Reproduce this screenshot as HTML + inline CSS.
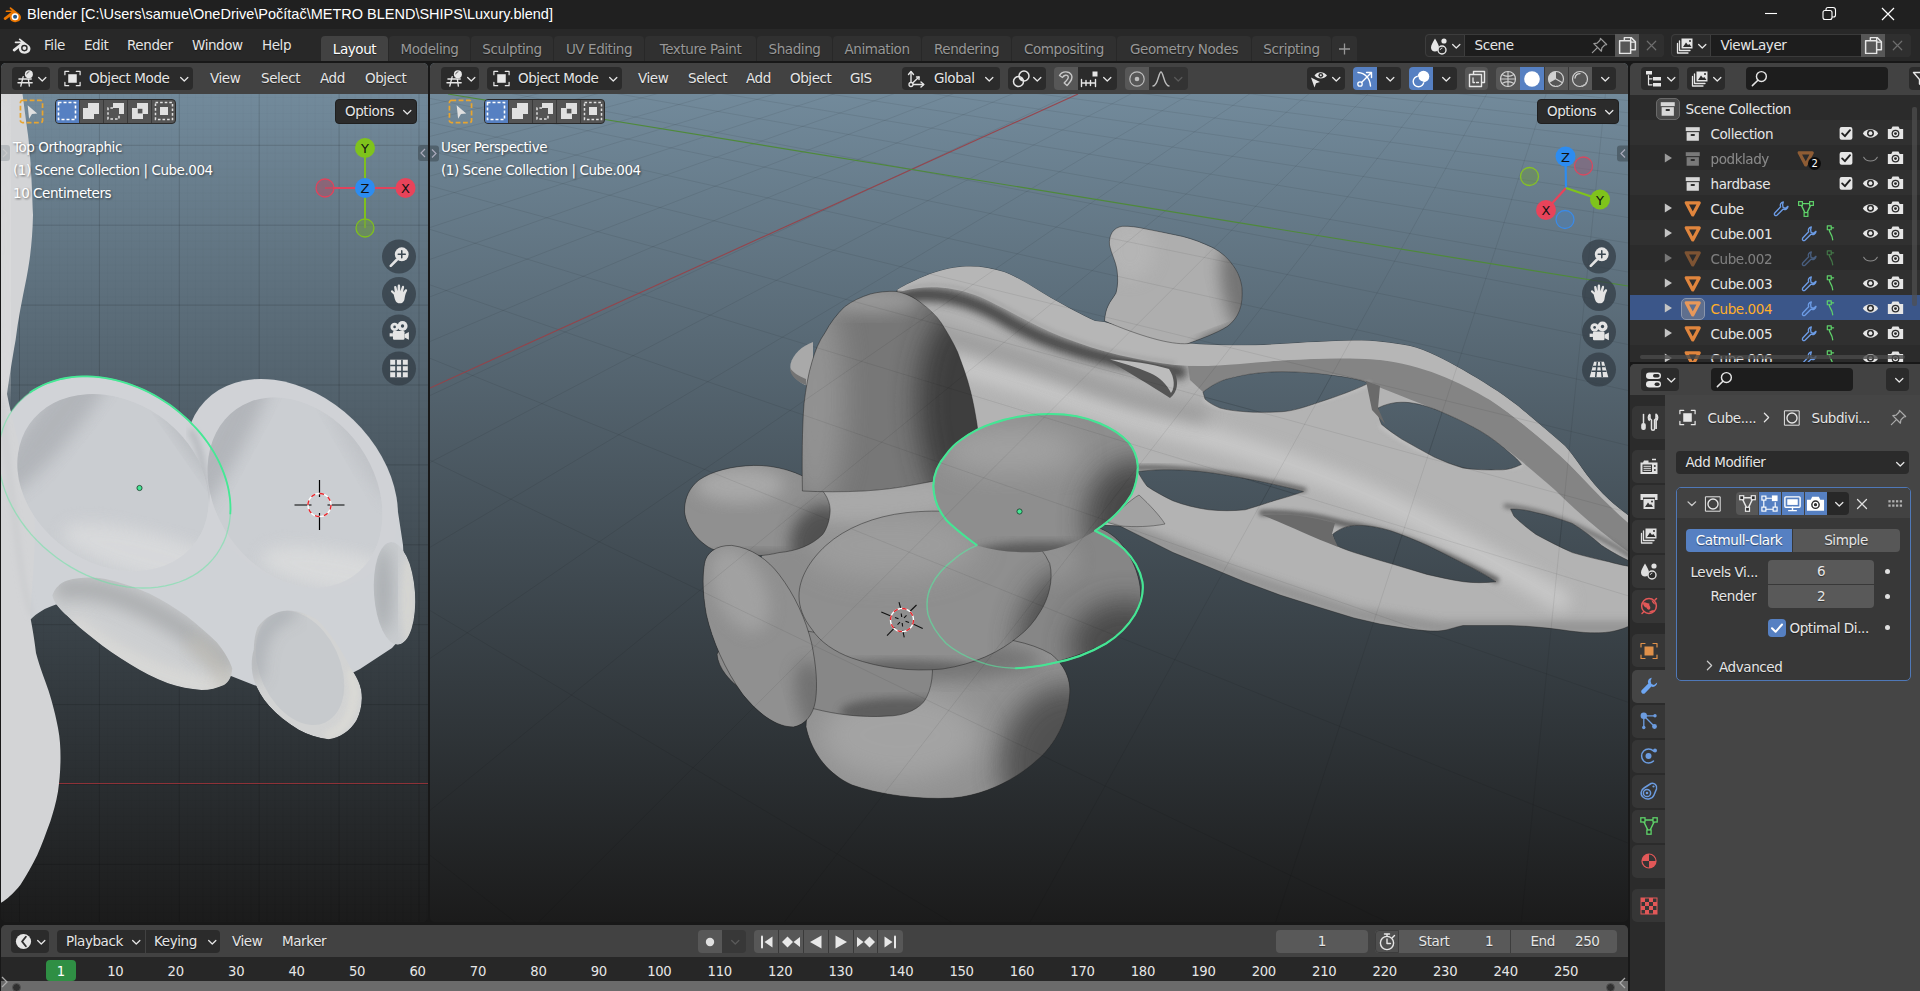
<!DOCTYPE html><html><head><meta charset="utf-8"><title>Blender</title><style>
*{box-sizing:border-box}
html,body{margin:0;padding:0}
body{width:1920px;height:991px;overflow:hidden;position:relative;background:#181818;font-family:"DejaVu Sans","Liberation Sans",sans-serif;font-size:13.5px;letter-spacing:-0.42px;color:#e6e6e6}
.a{position:absolute;display:block}
.t{white-space:nowrap}
.sh{text-shadow:0 0 2px rgba(0,0,0,.75),1px 1px 1px rgba(0,0,0,.6)}
.ts{text-shadow:0 1px 1px rgba(0,0,0,.45)}
</style></head><body><div class="a" style="left:0px;top:0px;width:1920px;height:29px;background:#202020"></div>
<svg class="a" style="left:3px;top:4px" width="19.5" height="19.5" viewBox="0 0 20 20"><path d="M1 14.2L8.6 8.3H3.6C2.4 8.3 2.4 6.6 3.6 6.6H9.2L7.2 5C6.2 4.2 7.3 2.9 8.3 3.7L17 10.4C19.5 12.8 18.6 16.3 16 17.8C13 19.4 9.3 18.6 7.7 16.4C6.9 15.2 6.8 14 7 13.1L3 16.2C1.9 17 0 15.3 1 14.2Z" fill="#ea7600"/><circle cx="12.4" cy="13.1" r="3.6" fill="#fff"/><circle cx="12.4" cy="13.1" r="2.1" fill="#265787"/></svg>
<div class="a t" style="left:27px;top:5px;line-height:18px;font-family:'Liberation Sans',sans-serif;font-size:14.5px;letter-spacing:0;color:#fff">Blender [C:\Users\samue\OneDrive\Počítač\METRO BLEND\SHIPS\Luxury.blend]</div>
<svg class="a" style="left:1760px;top:0" width="150" height="29" viewBox="0 0 150 29"><path d="M5 13.5H17" stroke="#fff" stroke-width="1.1"/><rect x="63" y="10.5" width="9" height="9" rx="2" fill="none" stroke="#fff" stroke-width="1.1"/><path d="M66 10.5V9.5A2 2 0 0 1 68 7.5H73A2.5 2.5 0 0 1 75.500 10V15A2 2 0 0 1 73.500 17H72" fill="none" stroke="#fff" stroke-width="1.1"/><path d="M122 8L134 20M134 8L122 20" stroke="#fff" stroke-width="1.2"/></svg>
<div class="a" style="left:0px;top:29px;width:1920px;height:32px;background:#282828"></div>
<svg class="a" style="left:12px;top:35px" width="20" height="20" viewBox="0 0 20 20"><path d="M1 14.2L8.6 8.3H3.6C2.4 8.3 2.4 6.6 3.6 6.6H9.2L7.2 5C6.2 4.2 7.3 2.9 8.3 3.7L17 10.4C19.5 12.8 18.6 16.3 16 17.8C13 19.4 9.3 18.6 7.7 16.4C6.9 15.2 6.8 14 7 13.1L3 16.2C1.9 17 0 15.3 1 14.2Z" fill="#e6e6e6"/><circle cx="12.4" cy="13.1" r="3.3" fill="#282828"/><circle cx="12.4" cy="13.1" r="1.9" fill="#e6e6e6"/></svg>
<div class="a t ts" style="left:44px;top:37px;line-height:16px;">File</div>
<div class="a t ts" style="left:84px;top:37px;line-height:16px;">Edit</div>
<div class="a t ts" style="left:127px;top:37px;line-height:16px;">Render</div>
<div class="a t ts" style="left:192px;top:37px;line-height:16px;">Window</div>
<div class="a t ts" style="left:262px;top:37px;line-height:16px;">Help</div>
<div class="a t ts" style="left:321px;top:36px;width:67px;height:25px;background:#424242;border-radius:4px 4px 0 0;text-align:center;line-height:26.5px;color:#fff">Layout</div>
<div class="a t ts" style="left:389px;top:36px;width:81px;height:25px;background:#303030;border-radius:4px 4px 0 0;text-align:center;line-height:26.5px;color:#989898">Modeling</div>
<div class="a t ts" style="left:471px;top:36px;width:82px;height:25px;background:#303030;border-radius:4px 4px 0 0;text-align:center;line-height:26.5px;color:#989898">Sculpting</div>
<div class="a t ts" style="left:554px;top:36px;width:90px;height:25px;background:#303030;border-radius:4px 4px 0 0;text-align:center;line-height:26.5px;color:#989898">UV Editing</div>
<div class="a t ts" style="left:645px;top:36px;width:111px;height:25px;background:#303030;border-radius:4px 4px 0 0;text-align:center;line-height:26.5px;color:#989898">Texture Paint</div>
<div class="a t ts" style="left:757px;top:36px;width:75px;height:25px;background:#303030;border-radius:4px 4px 0 0;text-align:center;line-height:26.5px;color:#989898">Shading</div>
<div class="a t ts" style="left:833px;top:36px;width:88px;height:25px;background:#303030;border-radius:4px 4px 0 0;text-align:center;line-height:26.5px;color:#989898">Animation</div>
<div class="a t ts" style="left:922px;top:36px;width:89px;height:25px;background:#303030;border-radius:4px 4px 0 0;text-align:center;line-height:26.5px;color:#989898">Rendering</div>
<div class="a t ts" style="left:1012px;top:36px;width:104px;height:25px;background:#303030;border-radius:4px 4px 0 0;text-align:center;line-height:26.5px;color:#989898">Compositing</div>
<div class="a t ts" style="left:1117px;top:36px;width:134px;height:25px;background:#303030;border-radius:4px 4px 0 0;text-align:center;line-height:26.5px;color:#989898">Geometry Nodes</div>
<div class="a t ts" style="left:1252px;top:36px;width:79px;height:25px;background:#303030;border-radius:4px 4px 0 0;text-align:center;line-height:26.5px;color:#989898">Scripting</div>
<div class="a" style="left:1332px;top:36px;width:25px;height:25px;background:#303030;border-radius:4px 4px 0 0"></div>
<svg class="a" style="left:1332px;top:36px" width="25" height="25"><path d="M12.5 7.500V18.5M7 13H18" stroke="#989898" stroke-width="1.3" fill="none"/></svg>
<div class="a" style="left:1425px;top:34px;width:239px;height:23px;background:#1d1d1d;border-radius:4px;border:1px solid #3a3a3a"></div>
<div class="a" style="left:1425px;top:34px;width:39.5px;height:23px;background:#2b2b2b;border-radius:4px 0 0 4px;border:1px solid #3d3d3d"></div>
<svg class="a" style="left:1429px;top:36px" width="20" height="20" viewBox="0 0 20 20"><path d="M6 2.5C8 6 10 9 10 11.5C10 14 8.3 15.5 6 15.5C3.7 15.5 2 14 2 11.5C2 9 4 6 6 2.5Z" fill="#e6e6e6"/><circle cx="15" cy="5" r="2.6" fill="#e6e6e6"/><circle cx="13" cy="14" r="4" fill="#2b2b2b" stroke="#e6e6e6" stroke-width="1.4"/><path d="M11.3 13.5A1.9 1.9 0 0 1 13 12" fill="none" stroke="#e6e6e6" stroke-width="0.9" stroke-linecap="round" stroke-linejoin="round" /></svg>
<svg class="a" style="left:1446px;top:37px" width="18" height="18" viewBox="0 0 20 20"><path d="M7.4 8.3L11.4 12.2L15.4 8.3" fill="none" stroke="#e6e6e6" stroke-width="1.4" stroke-linecap="round" stroke-linejoin="round" /></svg>
<div class="a t" style="left:1474.5px;top:37px;line-height:16px;">Scene</div>
<svg class="a" style="left:1590px;top:36px" width="19" height="19" viewBox="0 0 20 20"><path d="M11 2.5L17.5 9L15.5 9.5L12.5 12.5L12 16L4 8L7.5 7.5L10.5 4.5Z" fill="none" stroke="#9a9a9a" stroke-width="1.3" stroke-linecap="round" stroke-linejoin="round" /><path d="M7.8 12.2L2.5 17.5" fill="none" stroke="#9a9a9a" stroke-width="1.3" stroke-linecap="round" stroke-linejoin="round" /></svg>
<div class="a" style="left:1615px;top:34px;width:24px;height:23px;background:#575757"></div>
<svg class="a" style="left:1617px;top:35px" width="21" height="21" viewBox="0 0 20 20"><path d="M7 5V2.5H13.5L17.5 6.5V14H13" fill="none" stroke="#e6e6e6" stroke-width="1.4" stroke-linecap="round" stroke-linejoin="round" /><path d="M13 2.8V6.8H17" fill="none" stroke="#e6e6e6" stroke-width="1.2" stroke-linecap="round" stroke-linejoin="round" /><rect x="2.5" y="5.5" width="10.5" height="12" fill="none" stroke="#e6e6e6" stroke-width="1.4" stroke-linecap="round" stroke-linejoin="round" /></svg>
<div class="a" style="left:1639px;top:34px;width:25px;height:23px;background:#2f2f2f;border-radius:0 4px 4px 0"></div>
<svg class="a" style="left:1643px;top:37px" width="17" height="17" viewBox="0 0 20 20"><path d="M5 5L15 15M15 5L5 15" fill="none" stroke="#6e6e6e" stroke-width="1.4" stroke-linecap="round" stroke-linejoin="round" /></svg>
<div class="a" style="left:1671px;top:34px;width:239.5px;height:23px;background:#1d1d1d;border-radius:4px;border:1px solid #3a3a3a"></div>
<div class="a" style="left:1671px;top:34px;width:39.5px;height:23px;background:#2b2b2b;border-radius:4px 0 0 4px;border:1px solid #3d3d3d"></div>
<svg class="a" style="left:1675px;top:36px" width="20" height="20" viewBox="0 0 20 20"><rect x="6.5" y="2.5" width="11" height="10" fill="#e6e6e6"/><path d="M8 11L11 6.5L13 9L14.3 8L16.5 11Z" fill="#2b2b2b"/><circle cx="15" cy="5" r="1" fill="#2b2b2b"/><path d="M4.5 5V14.5H15M2.5 7.5V17H13" fill="none" stroke="#e6e6e6" stroke-width="1.3" stroke-linecap="round" stroke-linejoin="round" /></svg>
<svg class="a" style="left:1692px;top:37px" width="18" height="18" viewBox="0 0 20 20"><path d="M7.4 8.3L11.4 12.2L15.4 8.3" fill="none" stroke="#e6e6e6" stroke-width="1.4" stroke-linecap="round" stroke-linejoin="round" /></svg>
<div class="a t" style="left:1720.5px;top:37px;line-height:16px;">ViewLayer</div>
<div class="a" style="left:1860.5px;top:34px;width:24.5px;height:23px;background:#575757"></div>
<svg class="a" style="left:1862.5px;top:35px" width="21" height="21" viewBox="0 0 20 20"><path d="M7 5V2.5H13.5L17.5 6.5V14H13" fill="none" stroke="#e6e6e6" stroke-width="1.4" stroke-linecap="round" stroke-linejoin="round" /><path d="M13 2.8V6.8H17" fill="none" stroke="#e6e6e6" stroke-width="1.2" stroke-linecap="round" stroke-linejoin="round" /><rect x="2.5" y="5.5" width="10.5" height="12" fill="none" stroke="#e6e6e6" stroke-width="1.4" stroke-linecap="round" stroke-linejoin="round" /></svg>
<div class="a" style="left:1885px;top:34px;width:25.5px;height:23px;background:#2f2f2f;border-radius:0 4px 4px 0"></div>
<svg class="a" style="left:1889px;top:37px" width="17" height="17" viewBox="0 0 20 20"><path d="M5 5L15 15M15 5L5 15" fill="none" stroke="#6e6e6e" stroke-width="1.4" stroke-linecap="round" stroke-linejoin="round" /></svg>
<div class="a" style="left:1px;top:63px;width:426.5px;height:859px;border-radius:5px;overflow:hidden;background:linear-gradient(#728a9b 3.6%,#1b1b1b 100%)"><svg class="a" style="left:-1px;top:-63px" width="1920" height="991" viewBox="0 0 1920 991"><defs><filter id="lb3" x="-20%" y="-20%" width="140%" height="140%"><feGaussianBlur stdDeviation="3"/></filter><filter id="lb8" x="-30%" y="-30%" width="160%" height="160%"><feGaussianBlur stdDeviation="8"/></filter><filter id="lb16" x="-40%" y="-40%" width="180%" height="180%"><feGaussianBlur stdDeviation="16"/></filter><clipPath id="lcP3"><path d="M52.300 595.500C55 588 60 583 67.200 580.500C80 577 92 577 104.500 578.700C120 582 135 587 149.300 593.600C162 600 175 608 186.600 616C197 624 207 633 216.500 642.100C223 650 229 659 232.200 668.200C232 676 229 682 224 685C217 688 210 690 201.600 690C190 689 179 687 168 683.200C155 678 142 672 130.600 664.500C117 656 105 648 93.300 638.400C84 631 75 624 67.200 616C60 610 54 603 52.300 595.500Z"/></clipPath><clipPath id="lcP4"><path d="M257.600 627.200C264 618 275 611 287.400 610.400C298 610.500 309 614 317.300 619.700C330 632 342 650 350.900 668.200C356 676 360 683 361.300 690.600C363 701 361 712 356.500 720.500C350 731 340 738 328.500 739.200C318 738 308 735 298.600 729.800C287 723 277 715 268.800 705.600C262 698 257 689 253.800 679.400C251 670 251 659 253.800 649.600C254 641 255 634 257.600 627.200Z"/></clipPath><clipPath id="lcD1"><ellipse cx="113" cy="482.600" rx="102" ry="81.300" transform="rotate(35 113 482.600)"/></clipPath><clipPath id="lcD2"><ellipse cx="295" cy="492.500" rx="102" ry="79.400" transform="rotate(55 295 492.500)"/></clipPath><clipPath id="lcP5"><ellipse cx="394.500" cy="593.400" rx="20.500" ry="51.500" transform="rotate(-4 394.500 593.400)"/></clipPath><clipPath id="lcVP"><rect x="0" y="63" width="428" height="860"/></clipPath></defs><path d="M19.5 94V922M99.4 94V922M179.3 94V922M259.2 94V922M339.1 94V922M419.0 94V922M498.9 94V922M0 65.4H428M0 145.3H428M0 225.2H428M0 305.1H428M0 385.0H428M0 464.9H428M0 544.8H428M0 624.7H428M0 704.6H428M0 784.5H428M0 864.4H428M0 944.3H428" stroke="#000" stroke-opacity=".14" stroke-width="1" fill="none"/><path d="M3.5 94V922M11.5 94V922M27.5 94V922M35.5 94V922M43.5 94V922M51.4 94V922M59.4 94V922M67.4 94V922M75.4 94V922M83.4 94V922M91.4 94V922M107.4 94V922M115.4 94V922M123.4 94V922M131.3 94V922M139.3 94V922M147.3 94V922M155.3 94V922M163.3 94V922M171.3 94V922M187.3 94V922M195.3 94V922M203.2 94V922M211.2 94V922M219.2 94V922M227.2 94V922M235.2 94V922M243.2 94V922M251.2 94V922M267.2 94V922M275.2 94V922M283.2 94V922M291.1 94V922M299.1 94V922M307.1 94V922M315.1 94V922M323.1 94V922M331.1 94V922M347.1 94V922M355.1 94V922M363.1 94V922M371.0 94V922M379.0 94V922M387.0 94V922M395.0 94V922M403.0 94V922M411.0 94V922M427.0 94V922M0 89.3H428M0 97.3H428M0 105.3H428M0 113.3H428M0 121.3H428M0 129.2H428M0 137.2H428M0 153.2H428M0 161.2H428M0 169.2H428M0 177.2H428M0 185.2H428M0 193.2H428M0 201.2H428M0 209.2H428M0 217.1H428M0 233.1H428M0 241.1H428M0 249.1H428M0 257.1H428M0 265.1H428M0 273.1H428M0 281.1H428M0 289.1H428M0 297.0H428M0 313.0H428M0 321.0H428M0 329.0H428M0 337.0H428M0 345.0H428M0 353.0H428M0 361.0H428M0 369.0H428M0 376.9H428M0 392.9H428M0 400.9H428M0 408.9H428M0 416.9H428M0 424.9H428M0 432.9H428M0 440.9H428M0 448.9H428M0 456.8H428M0 472.8H428M0 480.8H428M0 488.8H428M0 496.8H428M0 504.8H428M0 512.8H428M0 520.8H428M0 528.8H428M0 536.7H428M0 552.7H428M0 560.7H428M0 568.7H428M0 576.7H428M0 584.7H428M0 592.7H428M0 600.7H428M0 608.7H428M0 616.6H428M0 632.6H428M0 640.6H428M0 648.6H428M0 656.6H428M0 664.6H428M0 672.6H428M0 680.6H428M0 688.5H428M0 696.5H428M0 712.5H428M0 720.5H428M0 728.5H428M0 736.5H428M0 744.5H428M0 752.5H428M0 760.5H428M0 768.5H428M0 776.4H428M0 792.4H428M0 800.4H428M0 808.4H428M0 816.4H428M0 824.4H428M0 832.4H428M0 840.4H428M0 848.4H428M0 856.3H428M0 872.3H428M0 880.3H428M0 888.3H428M0 896.3H428M0 904.3H428M0 912.3H428M0 920.3H428" stroke="#000" stroke-opacity=".014" stroke-width="1" fill="none"/><path d="M0 783.5H428" stroke="#8e3238" stroke-width="1.2"/><g clip-path="url(#lcVP)"><path d="M0 400L30 432L192 432L230 520L398 512L403 545L406 600L399 640L392 648L360 669L300 700L253.800 685L231 676L150 620L56 604.500C45 608 37 613 30 620L0 560Z" fill="#cfd2d6"/><ellipse cx="291.7" cy="484" rx="120" ry="89" transform="rotate(43.8 291.7 484)" fill="#d0d2d6" /><ellipse cx="114.5" cy="482.2" rx="125" ry="95" transform="rotate(35 114.5 482.2)" fill="#d1d3d7" /><path d="M190 430C200 445 205 470 206 500" stroke="#aeb1b6" stroke-width="6" fill="none" filter="url(#lb3)" opacity=".8"/><path d="M0 90L22 90C24 105 26 121 28 135C30 150 32 180 33 215C32.500 240 30 260 26.500 278C22 300 18 320 15.600 340C12 360 9 380 7 394C12 420 20 445 23.400 467C30 490 34 510 35 525.500C35 550 33 580 30 616C33 630 35 645 36 653C40 668 45 680 48.500 690.600C53 705 56 717 58 728C60 738 60.500 748 60.500 757.800C60.500 770 59.500 781 58 791.400C56 803 53 813 50.400 821.300C46 833 42 845 37.300 855C32 866 26 876 20.500 884.700C13 894 6 900 0 903.400Z" fill="#d3d4d6"/><path d="M0 392C5 440 12 500 20 560C24 590 28 605 32 615" stroke="#bfc1c4" stroke-width="2" fill="none" filter="url(#lb3)"/><path d="M2 94C8 200 12 300 4 395" stroke="#e2e2e2" stroke-width="10" fill="none" filter="url(#lb8)" opacity=".7"/><g clip-path="url(#lcD1)"><ellipse cx="113" cy="482.6" rx="102" ry="81.3" transform="rotate(35 113 482.6)" fill="#cacdd1" /><ellipse cx="58" cy="418" rx="100" ry="22" transform="rotate(-52 58 418)" fill="#aeb1b6" filter="url(#lb8)" opacity=".85"/><ellipse cx="150" cy="555" rx="90" ry="22" transform="rotate(15 150 555)" fill="#d9dadc" filter="url(#lb8)" opacity=".9"/><ellipse cx="195" cy="440" rx="12" ry="70" transform="rotate(-35 195 440)" fill="#b4b7bb" filter="url(#lb8)" opacity=".8"/></g><g clip-path="url(#lcD2)"><ellipse cx="295" cy="492.5" rx="102" ry="79.4" transform="rotate(55 295 492.5)" fill="#cbced2" /><ellipse cx="226" cy="436" rx="100" ry="20" transform="rotate(-62 226 436)" fill="#aeb1b6" filter="url(#lb8)" opacity=".85"/><ellipse cx="335" cy="570" rx="75" ry="20" transform="rotate(10 335 570)" fill="#dadbdc" filter="url(#lb8)" opacity=".9"/><ellipse cx="360" cy="440" rx="14" ry="70" transform="rotate(-30 360 440)" fill="#bbbec2" filter="url(#lb8)" opacity=".7"/></g><g clip-path="url(#lcP5)"><ellipse cx="394.5" cy="593.4" rx="20.5" ry="51.5" transform="rotate(-4 394.5 593.4)" fill="#c9cccf" /><ellipse cx="383" cy="590" rx="9" ry="45" fill="#a4a8ac" filter="url(#lb8)" opacity=".9"/><ellipse cx="408" cy="600" rx="7" ry="45" fill="#d6d6d2" filter="url(#lb3)" opacity=".9"/></g><g clip-path="url(#lcP3)"><path d="M52.300 595.500C55 588 60 583 67.200 580.500C80 577 92 577 104.500 578.700C120 582 135 587 149.300 593.600C162 600 175 608 186.600 616C197 624 207 633 216.500 642.100C223 650 229 659 232.200 668.200C232 676 229 682 224 685C217 688 210 690 201.600 690C190 689 179 687 168 683.200C155 678 142 672 130.600 664.500C117 656 105 648 93.300 638.400C84 631 75 624 67.200 616C60 610 54 603 52.300 595.500Z" fill="#cdcfd1"/><path d="M55 590C100 580 170 610 232 668" stroke="#a9abad" stroke-width="22" fill="none" filter="url(#lb8)" opacity=".9"/><path d="M70 622C110 655 170 685 225 688" stroke="#dddcd8" stroke-width="16" fill="none" filter="url(#lb8)" opacity=".9"/><path d="M190 640C215 660 228 675 226 690" stroke="#c2bfb6" stroke-width="14" fill="none" filter="url(#lb8)" opacity=".8"/></g><g clip-path="url(#lcP4)"><path d="M257.600 627.200C264 618 275 611 287.400 610.400C298 610.500 309 614 317.300 619.700C330 632 342 650 350.900 668.200C356 676 360 683 361.300 690.600C363 701 361 712 356.500 720.500C350 731 340 738 328.500 739.200C318 738 308 735 298.600 729.800C287 723 277 715 268.800 705.600C262 698 257 689 253.800 679.400C251 670 251 659 253.800 649.600C254 641 255 634 257.600 627.200Z" fill="#d2d3d3"/><ellipse cx="300" cy="668" rx="40" ry="60" transform="rotate(-25 300 668)" fill="#c7cacd"/><path d="M256 680C252 640 270 612 295 612" stroke="#a7abb0" stroke-width="14" fill="none" filter="url(#lb8)" opacity=".9"/><path d="M350 670C360 700 350 730 325 736" stroke="#dcdbd6" stroke-width="8" fill="none" filter="url(#lb3)" opacity=".9"/></g><path d="M216.9 553.9L212.8 559.2L208.3 564.0L203.3 568.5L197.9 572.6L192.1 576.2L185.9 579.4L179.3 582.0L172.5 584.2L165.3 585.9L157.9 587.1L150.3 587.8L142.5 588.0L134.6 587.7L126.6 586.8L118.5 585.4L110.4 583.6L102.3 581.2L94.3 578.4L86.4 575.1L78.6 571.3L71.0 567.1L63.6 562.5L56.5 557.5L49.6 552.1L43.1 546.4L36.9 540.4L31.0 534.1L25.6 527.5L20.6 520.7L16.1 513.7L12.1 506.6L8.5 499.4L5.5 492.1L3.0 484.7L1.0 477.3L-0.4 469.9L-1.2 462.6L-1.5 455.4L-1.2 448.4L-0.4 441.4L1.1 434.7L3.0 428.2L5.5 422.0L8.6 416.1L12.1 410.5L16.2 405.2L20.7 400.4L25.7 395.9L31.1 391.8L36.9 388.2L43.1 385.0L49.7 382.4L56.5 380.2L63.7 378.5L71.1 377.3L78.7 376.6L86.5 376.4L94.4 376.7L102.4 377.6L110.5 379.0L118.6 380.8L126.7 383.2L134.7 386.0L142.6 389.3L150.4 393.1L158.0 397.3L165.4 401.9L172.5 406.9L179.4 412.3L185.9 418.0L192.1 424.0L198.0 430.3L203.4 436.9L208.4 443.7L212.9 450.7L216.9 457.8L220.5 465.0L223.5 472.3L226.0 479.7L228.0 487.1L229.4 494.5L230.2 501.8L230.5 509.0L230.2 516.0L229.4 523.0L227.9 529.7L226.0 536.2L223.5 542.4L220.4 548.3L216.9 553.9Z" fill="none" stroke="#5fe8a0" stroke-width="1.3" opacity=".5"/><path d="M29.7 392.8L33.7 390.1L37.8 387.7L42.2 385.5L46.7 383.5L51.4 381.8L56.2 380.3L61.2 379.0L66.3 378.0L71.5 377.2L76.8 376.7L82.2 376.4L87.7 376.4L93.2 376.7L98.8 377.1L104.4 377.9L110.1 378.9L115.8 380.1L121.4 381.6L127.1 383.3L132.7 385.3L138.3 387.5L143.8 389.9L149.2 392.5L154.6 395.4L159.9 398.4L165.0 401.7L170.1 405.1L175.0 408.8L179.7 412.6L184.3 416.6L188.8 420.7L193.0 425.0L197.1 429.4L201.0 433.9L204.7 438.6L208.1 443.3L211.4 448.2L214.4 453.1L217.1 458.1L219.6 463.2L221.9 468.3L223.9 473.4L225.7 478.6L227.2 483.8L228.4 488.9L229.3 494.1L230.0 499.2L230.4 504.3L230.5 509.3L230.3 514.3" fill="none" stroke="#45e895" stroke-width="1.800"/><circle cx="139.500" cy="488" r="2.600" fill="#45e594" stroke="#1a3a2a" stroke-width=".8"/></g><g font-family="'DejaVu Sans','Liberation Sans',sans-serif" style="letter-spacing:-0.45px"><filter id="tb" x="-10%" y="-30%" width="120%" height="160%"><feGaussianBlur stdDeviation="1"/></filter><text x="14" y="153" font-size="13.5" fill="#000" fill-opacity=".55" filter="url(#tb)">Top Orthographic</text><text x="13" y="152" font-size="13.5" fill="#fff">Top Orthographic</text><text x="14" y="176" font-size="13.5" fill="#000" fill-opacity=".55" filter="url(#tb)">(1) Scene Collection | Cube.004</text><text x="13" y="175" font-size="13.5" fill="#fff">(1) Scene Collection | Cube.004</text><text x="14" y="199" font-size="13.5" fill="#000" fill-opacity=".55" filter="url(#tb)">10 Centimeters</text><text x="13" y="198" font-size="13.5" fill="#fff">10 Centimeters</text><path d="M365 188V148M365 188V228" stroke="#7fbf1f" stroke-width="2"/><path d="M365 188H405M365 188H325" stroke="#e0435c" stroke-width="2"/><circle cx="325" cy="188" r="9" fill="#a0566a" fill-opacity=".6" stroke="#e0435c" stroke-width="1.3"/><circle cx="365" cy="228" r="9" fill="#6f9a4a" fill-opacity=".6" stroke="#7fbf1f" stroke-width="1.3"/><circle cx="365" cy="148" r="10" fill="#7fc31c"/><text x="365" y="153" font-size="13" fill="#111" text-anchor="middle" letter-spacing="0">Y</text><circle cx="405.500" cy="188" r="10" fill="#e8435a"/><text x="405.5" y="193" font-size="13" fill="#111" text-anchor="middle" letter-spacing="0">X</text><circle cx="365" cy="188" r="10" fill="#2d8cf0"/><text x="365" y="193" font-size="13" fill="#111" text-anchor="middle" letter-spacing="0">Z</text><circle cx="399" cy="256.5" r="17" fill="#323c44" fill-opacity=".72"/><svg x="388" y="245.5" width="22" height="22" viewBox="0 0 20 20"><circle cx="12.5" cy="8" r="6.3" fill="#e4e4e4"/><path d="M8 13L2.5 18.5" fill="none" stroke="#e4e4e4" stroke-width="2.4" stroke-linecap="round" stroke-linejoin="round" /><path d="M12.5 4.8V11.2M9.3 8H15.7" fill="none" stroke="#3b4852" stroke-width="1.4" stroke-linecap="round" stroke-linejoin="round" /></svg><circle cx="399" cy="294" r="17" fill="#323c44" fill-opacity=".72"/><svg x="388" y="283" width="22" height="22" viewBox="0 0 20 20"><path d="M5.2 10.5L3 8.4C2 7.4 3.3 6 4.4 7L6.2 8.6L5.6 4C5.4 2.6 7.4 2.2 7.7 3.7L8.6 7.6L8.8 2.4C8.9 1 11 1 11 2.4L11.2 7.6L12.6 3.4C13 2 15 2.6 14.6 4L13.6 8.4L15.6 6C16.6 5 18 6 17.2 7.2C15.5 10 15.5 12 15 14.5C14.5 17.5 12.5 18.5 10.5 18.5C7.5 18.5 6.5 16.5 5.2 10.5Z" fill="#e4e4e4"/></svg><circle cx="399" cy="331.5" r="17" fill="#323c44" fill-opacity=".72"/><svg x="388" y="320.5" width="22" height="22" viewBox="0 0 20 20"><circle cx="6" cy="5.8" r="3.8" fill="#e4e4e4"/><circle cx="13.2" cy="5" r="4.6" fill="#e4e4e4"/><rect x="4.5" y="9.5" width="10.5" height="8" rx="1.2" fill="#e4e4e4"/><path d="M15 12.5L19 10.5V17.5L15 15.5Z" fill="#e4e4e4"/><path d="M1.5 11.5h3v3h-3z" fill="#e4e4e4"/><circle cx="6" cy="5.8" r="1.2" fill="#3b4852"/><circle cx="13.2" cy="5" r="1.5" fill="#3b4852"/></svg><circle cx="399" cy="368.5" r="17" fill="#323c44" fill-opacity=".72"/><svg x="388" y="357.5" width="22" height="22" viewBox="0 0 20 20"><rect x="2" y="2" width="16" height="16" fill="#e4e4e4"/><path d="M7.3 2V18M12.7 2V18M2 7.3H18M2 12.7H18" stroke="#3b4852" stroke-width="1.5"/></svg><path d="M294.5 505H311.5M327.5 505H344.5M319.5 480V497M319.5 513V530" stroke="#000" stroke-width="1.2"/><circle cx="319.5" cy="505" r="11.500" fill="none" stroke="#fff" stroke-width="1.4"/><circle cx="319.5" cy="505" r="11.500" fill="none" stroke="#e8262c" stroke-width="1.4" stroke-dasharray="4.5 4.5"/><rect x="-4" y="145" width="14" height="16" rx="3" fill="#9aa2a8" fill-opacity=".55"/><path d="M3 149L7 153L3 157" stroke="#ccc" stroke-width="1.2" fill="none" opacity=".8"/><rect x="418" y="145" width="14" height="16" rx="3" fill="#4a5963" fill-opacity=".8"/><path d="M425 149L421 153L425 157" stroke="#aab" stroke-width="1.2" fill="none"/></g></svg></div>
<div class="a" style="left:1px;top:63px;width:426.5px;height:31px;background:#424242;border-radius:5px 5px 0 0"></div>
<div class="a" style="left:12px;top:67px;width:38px;height:23px;background:#2b2b2b;border-radius:4px"></div>
<svg class="a" style="left:17px;top:69px" width="19" height="19" viewBox="0 0 20 20"><path d="M2 10.5H15M1 14.5H16M6.5 8L4 18M12 11L13 18" fill="none" stroke="#e6e6e6" stroke-width="1.4" stroke-linecap="round" stroke-linejoin="round" /><circle cx="12.5" cy="5.5" r="4.2" fill="#e6e6e6"/><path d="M10.2 5.2A2.6 2.6 0 0 1 12.6 2.9" fill="none" stroke="#555" stroke-width="1" stroke-linecap="round" stroke-linejoin="round" /></svg>
<svg class="a" style="left:32px;top:70px" width="18" height="18" viewBox="0 0 20 20"><path d="M7.4 8.3L11.4 12.2L15.4 8.3" fill="none" stroke="#e6e6e6" stroke-width="1.4" stroke-linecap="round" stroke-linejoin="round" /></svg>
<div class="a" style="left:58px;top:67px;width:135px;height:23px;background:#2b2b2b;border-radius:4px"></div>
<svg class="a" style="left:63px;top:69px" width="19" height="19" viewBox="0 0 20 20"><rect x="5.5" y="5.5" width="9" height="9" fill="#e6e6e6"/><path d="M2 6V2.5H6M14 2.5H18V6M18 14V17.5H14M6 17.5H2V14" fill="none" stroke="#e6e6e6" stroke-width="1.3" stroke-linecap="round" stroke-linejoin="round" /></svg>
<div class="a t ts" style="left:89px;top:70px;line-height:16px;">Object Mode</div>
<svg class="a" style="left:174px;top:70px" width="18" height="18" viewBox="0 0 20 20"><path d="M7.4 8.3L11.4 12.2L15.4 8.3" fill="none" stroke="#e6e6e6" stroke-width="1.4" stroke-linecap="round" stroke-linejoin="round" /></svg>
<div class="a t ts" style="left:210px;top:70px;line-height:16px;">View</div>
<div class="a t ts" style="left:261px;top:70px;line-height:16px;">Select</div>
<div class="a t ts" style="left:320px;top:70px;line-height:16px;">Add</div>
<div class="a t ts" style="left:365px;top:70px;line-height:16px;">Object</div>
<svg class="a" style="left:19px;top:99px" width="25" height="25" viewBox="0 0 26 26"><rect x="1.5" y="1.5" width="23" height="23" rx="2" fill="none" stroke="#e8a530" stroke-width="1.8" stroke-dasharray="5 2.6"/><path d="M9 6.5L19 15L13.5 15.5L10.5 20.5Z" fill="#e0e0e0"/></svg>
<div class="a" style="left:54.5px;top:99px;width:121.5px;height:24.5px;background:#545454;border-radius:4px;border:1px solid #2a2a2a;overflow:hidden"></div>
<div class="a" style="left:55.5px;top:100px;width:23.5px;height:22.5px;background:#5680c2;border-radius:3px 0 0 3px"></div>
<svg class="a" style="left:55.3px;top:99.3px" width="24" height="24" viewBox="0 0 24 24"><rect x="3.5" y="3.5" width="17" height="17" fill="none" stroke="#fff" stroke-width="1.6" stroke-dasharray="3 2"/></svg>
<div class="a" style="left:79.1px;top:100px;width:1px;height:22.5px;background:#3a3a3a"></div>
<svg class="a" style="left:79.39999999999999px;top:99.3px" width="24" height="24" viewBox="0 0 24 24"><path d="M9 4H20V15H15V20H4V9H9Z" fill="#e0e0e0"/></svg>
<div class="a" style="left:103.2px;top:100px;width:1px;height:22.5px;background:#3a3a3a"></div>
<svg class="a" style="left:103.5px;top:99.3px" width="24" height="24" viewBox="0 0 24 24"><path d="M9 4H20V15H15V9H9Z" fill="#e0e0e0"/><path d="M9 9H4V20H15V15" fill="none" stroke="#e0e0e0" stroke-width="1.5" stroke-dasharray="2.6 2"/></svg>
<div class="a" style="left:127.30000000000001px;top:100px;width:1px;height:22.5px;background:#3a3a3a"></div>
<svg class="a" style="left:127.60000000000001px;top:99.3px" width="24" height="24" viewBox="0 0 24 24"><path d="M9 4H20V15H15V20H4V9H9Z" fill="#e0e0e0"/><rect x="9.8" y="9.8" width="4.6" height="4.6" fill="#545454"/></svg>
<div class="a" style="left:151.4px;top:100px;width:1px;height:22.5px;background:#3a3a3a"></div>
<svg class="a" style="left:151.70000000000002px;top:99.3px" width="24" height="24" viewBox="0 0 24 24"><rect x="8" y="8" width="8" height="8" fill="#e0e0e0"/><rect x="3.5" y="3.5" width="17" height="17" fill="none" stroke="#e0e0e0" stroke-width="1.5" stroke-dasharray="2.6 2"/></svg>
<div class="a" style="left:335px;top:99px;width:82px;height:24.5px;background:#2b2b2b;border-radius:4px;border:1px solid #1f1f1f"></div>
<div class="a t ts" style="left:345px;top:103px;line-height:16px;">Options</div>
<svg class="a" style="left:397px;top:103px" width="18" height="18" viewBox="0 0 20 20"><path d="M7.4 8.3L11.4 12.2L15.4 8.3" fill="none" stroke="#e6e6e6" stroke-width="1.4" stroke-linecap="round" stroke-linejoin="round" /></svg>
<div class="a" style="left:430px;top:63px;width:1197.5px;height:859px;border-radius:5px;overflow:hidden;background:linear-gradient(#728a9b 3.6%,#1b1b1b 100%)"><svg class="a" style="left:-430px;top:-63px" width="1920" height="991" viewBox="0 0 1920 991"><defs><filter id="b2" x="-20%" y="-20%" width="140%" height="140%"><feGaussianBlur stdDeviation="2"/></filter><filter id="b4" x="-20%" y="-20%" width="140%" height="140%"><feGaussianBlur stdDeviation="4"/></filter><filter id="b8" x="-30%" y="-30%" width="160%" height="160%"><feGaussianBlur stdDeviation="8"/></filter><filter id="b14" x="-40%" y="-40%" width="180%" height="180%"><feGaussianBlur stdDeviation="14"/></filter><clipPath id="cHull"><path clip-rule="evenodd" d="M897 290C905 285 915 280 930 274C945 269 955 267 966 266.500C980 266 991 268 1004 272C1016 276 1034 288 1051 298C1067 307 1082 315 1095 321L1104 322L1188 343.500C1210 345 1245 346.500 1280 344C1303 342.500 1330 341 1354 340.500C1375 340.500 1391 342.500 1410 346C1427 350 1445 360 1463 370C1482 381 1500 392 1518 406C1536 421 1551 434 1565 446C1575 457 1583 471 1594 484C1605 497 1616 507 1640 524V622L1627 627C1615 632 1601 635 1570 631C1550 628 1520 625 1500 625.500H1463C1455 627 1446 631 1438 631C1425 631.500 1409 629 1380 624L1354 618L1318 607L1280 595L1245 582L1210 567.500L1173 552.500L1150 541L1120 526L1000 520L940 480L900 400ZM1203 392C1212 385 1220 381 1227 379C1245 374 1262 372 1282 371.700C1300 372 1318 373 1333 375.300C1346 377 1358 379 1369 383C1355 390 1338 396 1318 402.600C1305 407 1293 411 1282 411.700C1268 412.500 1255 412.500 1245 411.700C1235 411 1227 410 1220 408C1213 405 1208 402 1205 399ZM1378 408C1388 403 1398 401.500 1409 402.600C1421 404 1433 408 1445 413.500C1458 419 1470 425 1481.500 431.700C1492 438 1502 446 1510.500 453.500C1515 457 1519 461 1521.500 464.400C1514 468 1507 470 1500 469.800C1488 470 1475 470 1463 468C1453 465 1443 461 1434 457C1423 451 1412 445 1401.600 439C1394 434 1387 429 1381.600 424.400C1379 419 1378 413 1378 408ZM1138 471.600C1150 470 1161 469.500 1172.700 469.800C1190 470 1208 472 1227 475.300C1243 478 1259 481 1274 484.400C1285 487 1295 489 1303.500 491.600C1294 495 1284 498 1274 500.700C1264 504 1255 507 1245 509.800C1233 511 1221 511 1209 509.800C1196 508 1184 505 1172.700 500.700C1163 496 1154 491 1147 486.200C1143 481 1140 476 1138 471.600ZM1332.600 534.400C1339 529 1346 526 1354.400 525.400C1366 525 1378 527 1390.700 530.800C1403 535 1415 540 1427 545.300C1439 551 1451 557 1463.400 563.500C1475 569 1486 575 1496 581.700C1485 583 1474 583 1463.400 581.700C1451 580 1439 577 1427 574.400C1415 571 1403 567 1390.700 563.500C1378 560 1366 556 1354.400 552.600C1347 550 1341 548 1336 545.300ZM1510.600 509C1519 509 1527 510 1536 512.600C1548 515 1560 519 1572.400 523.500C1583 530 1592 537 1601.500 545.300C1609 550 1616 555 1640 566L1640 568C1625 566 1617 564 1608.700 561.700C1596 559 1584 556 1572.400 552.600C1560 547 1548 541 1536 534.400C1527 528 1520 522 1514 516.300Z"/></clipPath><clipPath id="cFin"><path d="M1104.500 321C1105 315 1106 310 1108 306C1110 301 1114 297 1116 293C1118 286 1118 278 1117 270C1116 262 1111 253 1109.500 245C1109 240 1110 236 1112 232.600C1114 229 1118 227 1122 226.300C1130 226 1137 227 1145 228.800C1158 231 1170 234 1182.600 236.400C1193 239 1203 243 1213 247.700C1221 252 1228 258 1233 265.400C1238 272 1241 280 1242 288C1242.500 296 1242 304 1239.400 310.800C1237 317 1233 322 1228 326C1222 330 1215 333 1208 336C1201 339 1195 341 1188 343.600C1170 345 1140 336 1104.500 321Z"/></clipPath><clipPath id="cDome"><path d="M802.400 491C802 460 802 430 804 403.800C806 388 808 375 812 361.800C815 351 819 341 825 332.700C830 323 837 314 844.400 306.900C852 301 861 297 870.300 294C878 292 887 291 896 291.400C905 293 914 297 922 303.700C929 309 936 315 941.300 323C947 332 953 342 957.500 352C962 364 967 377 970.400 390.900C973 401 975 412 976.800 423.200L982 462L940 479.700C930 482 923 483 915.500 484.500C898 488 881 490 863.800 491C843 492 822 492 802.400 491Z"/></clipPath><clipPath id="cA"><path d="M684.500 512C684 498 690 487 699 480C712 471 732 466 753.600 465.400C776 465 800 472 815 483.600C826 492 831 503 830 513C829 523 826 530 822.600 534.500C812 545 797 551 779 552.600C765 556 750 557 735 555C722 553 712 550 706 545.400C695 538 686 525 684.500 512Z"/></clipPath><clipPath id="cB"><path d="M704.500 563.500C706 553 716 545 731.800 545.400C752 548 768 560 779 574.400C795 595 806 620 811.700 643.500C816 665 818 685 815.300 701.600C813 715 805 725 793.500 727C775 727 757 712 742.700 694.300C725 670 712 640 706.300 614.400C703 596 702 578 704.500 563.500Z"/></clipPath><clipPath id="cC"><path d="M799 596C799 578 810 560 826 545.400C845 528 875 516 906 512.700C940 509 975 512 997 520C1020 528 1040 542 1049.700 563.500C1054 580 1048 600 1040 612C1034 622 1027 630 1018.800 636.200C1000 652 975 664 942.500 669C910 672 880 668 851.700 658C835 652 820 642 811.700 629C803 618 799 607 799 596Z"/></clipPath><clipPath id="cD"><path d="M806 727C806 700 830 670 880 650C930 632 1010 630 1051 654C1065 665 1071 680 1069.700 694C1068 720 1055 745 1037 760C1015 780 985 795 953 798C920 800 880 795 852 785C830 775 812 755 806 727Z"/></clipPath><clipPath id="cE"><path d="M717 654C725 640 760 630 800 630L930 650C935 670 932 690 924 701.600C915 712 900 716 888 716C860 718 835 714 815 709C785 702 760 700 743 690C730 682 718 668 717 654Z"/></clipPath><clipPath id="cG"><path d="M1000 560C1040 520 1100 510 1125 549C1140 570 1146 600 1135 614C1125 635 1100 650 1052 663C1020 670 990 668 970 655Z"/></clipPath><clipPath id="cF"><path d="M977 545.400C966 537 955 529 946.200 519.900C938 510 934 499 933.400 487.200C933 475 938 464 946.200 454.500C950 449 955 444 960.700 440C970 433 981 427 993 423.200C1011 417 1031 414 1051 414C1068 414 1085 417 1099.600 423.200C1111 428 1121 434 1128.700 442.600C1134 449 1137 457 1137.700 465.200C1138 475 1136 485 1131.500 494.500C1123 509 1110 521 1095 530.800C1080 540 1060 550 1040 552C1020 553 1000 552 977 545.400Z"/></clipPath><clipPath id="mclip"><path d="M897 290C905 285 915 280 930 274C945 269 955 267 966 266.500C980 266 991 268 1004 272C1016 276 1034 288 1051 298C1067 307 1082 315 1095 321L1104 322L1188 343.500C1210 345 1245 346.500 1280 344C1303 342.500 1330 341 1354 340.500C1375 340.500 1391 342.500 1410 346C1427 350 1445 360 1463 370C1482 381 1500 392 1518 406C1536 421 1551 434 1565 446C1575 457 1583 471 1594 484C1605 497 1616 507 1640 524V622L1627 627C1615 632 1601 635 1570 631C1550 628 1520 625 1500 625.500H1463C1455 627 1446 631 1438 631C1425 631.500 1409 629 1380 624L1354 618L1318 607L1280 595L1245 582L1210 567.500L1173 552.500L1150 541L1120 526L1000 520L940 480L900 400ZM1104.500 321C1105 315 1106 310 1108 306C1110 301 1114 297 1116 293C1118 286 1118 278 1117 270C1116 262 1111 253 1109.500 245C1109 240 1110 236 1112 232.600C1114 229 1118 227 1122 226.300C1130 226 1137 227 1145 228.800C1158 231 1170 234 1182.600 236.400C1193 239 1203 243 1213 247.700C1221 252 1228 258 1233 265.400C1238 272 1241 280 1242 288C1242.500 296 1242 304 1239.400 310.800C1237 317 1233 322 1228 326C1222 330 1215 333 1208 336C1201 339 1195 341 1188 343.600C1170 345 1140 336 1104.500 321ZM802.400 491C802 460 802 430 804 403.800C806 388 808 375 812 361.800C815 351 819 341 825 332.700C830 323 837 314 844.400 306.900C852 301 861 297 870.300 294C878 292 887 291 896 291.400C905 293 914 297 922 303.700C929 309 936 315 941.300 323C947 332 953 342 957.500 352C962 364 967 377 970.400 390.900C973 401 975 412 976.800 423.200L982 462L940 479.700C930 482 923 483 915.500 484.500C898 488 881 490 863.800 491C843 492 822 492 802.400 491ZM684.500 512C684 498 690 487 699 480C712 471 732 466 753.600 465.400C776 465 800 472 815 483.600C826 492 831 503 830 513C829 523 826 530 822.600 534.500C812 545 797 551 779 552.600C765 556 750 557 735 555C722 553 712 550 706 545.400C695 538 686 525 684.500 512ZM704.500 563.500C706 553 716 545 731.800 545.400C752 548 768 560 779 574.400C795 595 806 620 811.700 643.500C816 665 818 685 815.300 701.600C813 715 805 725 793.500 727C775 727 757 712 742.700 694.300C725 670 712 640 706.300 614.400C703 596 702 578 704.500 563.500ZM799 596C799 578 810 560 826 545.400C845 528 875 516 906 512.700C940 509 975 512 997 520C1020 528 1040 542 1049.700 563.500C1054 580 1048 600 1040 612C1034 622 1027 630 1018.800 636.200C1000 652 975 664 942.500 669C910 672 880 668 851.700 658C835 652 820 642 811.700 629C803 618 799 607 799 596ZM806 727C806 700 830 670 880 650C930 632 1010 630 1051 654C1065 665 1071 680 1069.700 694C1068 720 1055 745 1037 760C1015 780 985 795 953 798C920 800 880 795 852 785C830 775 812 755 806 727ZM717 654C725 640 760 630 800 630L930 650C935 670 932 690 924 701.600C915 712 900 716 888 716C860 718 835 714 815 709C785 702 760 700 743 690C730 682 718 668 717 654ZM1000 560C1040 520 1100 510 1125 549C1140 570 1146 600 1135 614C1125 635 1100 650 1052 663C1020 670 990 668 970 655ZM977 545.400C966 537 955 529 946.200 519.900C938 510 934 499 933.400 487.200C933 475 938 464 946.200 454.500C950 449 955 444 960.700 440C970 433 981 427 993 423.200C1011 417 1031 414 1051 414C1068 414 1085 417 1099.600 423.200C1111 428 1121 434 1128.700 442.600C1134 449 1137 457 1137.700 465.200C1138 475 1136 485 1131.500 494.500C1123 509 1110 521 1095 530.800C1080 540 1060 550 1040 552C1020 553 1000 552 977 545.400Z"/></clipPath></defs><path d="M770.3 -92.3L2165.2 -26.6M770.3 -92.3L-156.7 -9.0M759.5 -91.3L2177.7 -23.3M781.8 -91.7L-193.7 -2.3M748.5 -90.3L2190.7 -19.8M793.5 -91.2L-183.3 0.3M737.1 -89.3L2162.5 -18.2M805.3 -90.6L-172.5 2.9M725.5 -88.3L2175.6 -14.4M817.3 -90.1L-161.5 5.7M713.6 -87.2L2189.4 -10.5M829.5 -89.5L-150.1 8.5M701.4 -86.1L2159.4 -8.7M841.9 -88.9L-190.9 16.7M688.8 -85.0L2173.2 -4.5M854.4 -88.3L-179.2 19.9M675.9 -83.8L2187.9 0.0M867.2 -87.7L-167.2 23.2M662.6 -82.6L2155.9 2.0M880.1 -87.1L-154.7 26.6M649.0 -81.4L2170.6 6.9M893.2 -86.5L-141.8 30.1M634.9 -80.1L2186.2 12.0M906.5 -85.9L-187.4 40.6M620.5 -78.8L2151.8 14.3M920.0 -85.2L-174.1 44.6M605.6 -77.5L2167.5 19.9M933.7 -84.6L-160.4 48.8M590.3 -76.1L2184.2 25.8M947.7 -83.9L-146.1 53.2M574.5 -74.7L2147.2 28.4M961.8 -83.3L-197.5 66.3M558.3 -73.2L2164.0 34.9M976.2 -82.6L-182.8 71.4M541.5 -71.7L2181.9 41.8M990.8 -81.9L-167.5 76.7M524.2 -70.2L2141.8 45.0M1005.6 -81.2L-151.5 82.3M506.3 -68.6L2159.8 52.6M1020.7 -80.5L-134.8 88.2M487.9 -66.9L2179.2 60.7M1036.0 -79.8L-194.0 105.8M468.8 -65.2L2135.4 64.5M1051.5 -79.0L-176.7 112.8M449.1 -63.4L2154.9 73.6M1067.3 -78.3L-158.6 120.2M428.8 -61.6L2176.0 83.4M1083.4 -77.5L-139.4 127.9M407.7 -59.7L2198.8 94.0M1099.8 -76.8L-119.2 136.1M385.8 -57.7L2149.0 98.9M1116.4 -76.0L-189.1 161.3M363.2 -55.7L2172.1 110.9M1133.3 -75.2L-168.1 171.5M339.7 -53.6L2197.3 124.1M1150.5 -74.4L-145.8 182.2M315.3 -51.4L2141.6 130.2M1167.9 -73.6L-122.0 193.7M290.0 -49.1L2167.2 145.2M1185.7 -72.7L-96.6 206.0M263.8 -46.8L2195.4 161.9M1203.8 -71.9L-181.8 244.7M236.4 -44.3L2132.3 169.7M1222.3 -71.0L-155.0 260.8M208.0 -41.7L2160.9 189.1M1241.0 -70.1L-126.1 278.0M178.3 -39.1L2193.0 210.8M1260.1 -69.2L-94.7 296.8M147.4 -36.3L2120.2 221.2M1279.5 -68.3L-60.6 317.2M115.2 -33.4L2152.6 247.1M1299.3 -67.4L-169.5 384.4M81.5 -30.4L2189.6 276.8M1319.5 -66.4L-132.6 413.4M46.3 -27.2L2103.8 291.1M1340.0 -65.5L-91.6 445.6M9.5 -23.9L2141.2 327.6M1361.0 -64.5L-45.8 481.5M-29.1 -20.4L2184.9 370.3M1382.3 -63.5L-195.7 607.6M-69.6 -16.8L2080.3 391.4M1404.0 -62.4L-144.7 665.8M-112.1 -13.0L2124.2 446.5M1426.2 -61.4L-85.5 733.6M-156.7 -9.0L2177.8 513.6M1448.8 -60.3L-15.9 813.3M-193.7 -2.3L2043.6 547.6M1471.8 -59.2L67.2 908.4M-190.9 16.7L2096.6 640.2M1495.3 -58.1L168.2 1023.8M-187.4 40.6L2165.4 760.1M1519.3 -57.0L293.3 1167.0M-197.5 66.3L1978.6 824.4M1543.8 -55.9L682.3 1053.4M-194.0 105.8L2043.7 1011.3M1568.8 -54.7L874.4 1204.2M-189.1 161.3L2139.0 1285.0M1594.3 -53.5L1222.6 1084.4M-181.8 244.7L1488.6 1243.4M1620.3 -52.3L1488.6 1243.4M-169.5 384.4L874.4 1204.2M1646.9 -51.0L1791.0 1117.0M-195.7 607.6L293.3 1167.0M1674.0 -49.7L2139.0 1285.0M1701.8 -48.4L2165.4 760.1M1730.2 -47.1L2177.8 513.6M1759.2 -45.7L2184.9 370.3M1788.8 -44.3L2189.6 276.8M1819.1 -42.9L2193.0 210.8M1850.2 -41.4L2195.4 161.9M1881.9 -39.9L2197.3 124.1M1914.4 -38.4L2198.8 94.0M1947.7 -36.8L2179.2 60.7M1981.7 -35.2L2181.9 41.8M2016.6 -33.6L2184.2 25.8M2052.4 -31.9L2186.2 12.0M2089.1 -30.2L2187.9 0.0M2126.7 -28.4L2189.4 -10.5M2165.2 -26.6L2190.7 -19.8" stroke="#000" stroke-opacity=".075" stroke-width="1" fill="none"/><path d="M1078 94L430 388" stroke="#9a3f46" stroke-width="1.1" stroke-opacity=".9" fill="none"/><path d="M448 94L1628 286" stroke="#4f8a3a" stroke-width="1.2" fill="none"/><g clip-path="url(#cHull)"><path d="M897 290C905 285 915 280 930 274C945 269 955 267 966 266.500C980 266 991 268 1004 272C1016 276 1034 288 1051 298C1067 307 1082 315 1095 321L1104 322L1188 343.500C1210 345 1245 346.500 1280 344C1303 342.500 1330 341 1354 340.500C1375 340.500 1391 342.500 1410 346C1427 350 1445 360 1463 370C1482 381 1500 392 1518 406C1536 421 1551 434 1565 446C1575 457 1583 471 1594 484C1605 497 1616 507 1640 524V622L1627 627C1615 632 1601 635 1570 631C1550 628 1520 625 1500 625.500H1463C1455 627 1446 631 1438 631C1425 631.500 1409 629 1380 624L1354 618L1318 607L1280 595L1245 582L1210 567.500L1173 552.500L1150 541L1120 526L1000 520L940 480L900 400Z" fill="#b3b3b3"/><path d="M960 365C1040 385 1100 410 1160 425C1240 445 1330 475 1400 510C1450 535 1500 565 1560 600" fill="none" stroke="#cdcdcd" stroke-width="22" opacity="0.8" filter="url(#b8)" stroke-linecap="round"/><path d="M1130 530L1245 578L1354 614L1440 628L1640 628" fill="none" stroke="#8c8c8c" stroke-width="14" opacity="0.8" filter="url(#b4)" stroke-linecap="round"/><path d="M905 296C940 290 975 300 1010 322C1050 345 1100 360 1180 372" fill="none" stroke="#3c3c3c" stroke-width="14" opacity="0.9" filter="url(#b4)" stroke-linecap="round"/><path d="M930 330C990 350 1040 365 1090 385C1130 400 1170 410 1200 415" fill="none" stroke="#8a8a8a" stroke-width="16" opacity="0.6" filter="url(#b8)" stroke-linecap="round"/><path d="M1188 366C1230 364 1280 360 1330 358C1380 357 1420 362 1455 378C1490 396 1525 425 1560 455C1585 480 1610 505 1640 530V560C1610 540 1580 515 1555 490C1530 468 1500 442 1470 425C1440 410 1405 398 1369 383C1340 372 1290 370 1250 374C1230 376 1215 382 1203 392L1190 380Z" fill="#828282" opacity="0.95" /><path d="M1132 468C1170 466 1230 472 1304 490" fill="none" stroke="#5e5e5e" stroke-width="5" opacity="0.9" filter="url(#b2)" stroke-linecap="round"/><path d="M1262 513C1290 512 1320 517 1345 524C1380 528 1430 545 1496 580" fill="none" stroke="#5a5a5a" stroke-width="6" opacity="0.9" filter="url(#b2)" stroke-linecap="round"/><path d="M1506 506C1540 510 1580 522 1640 562" fill="none" stroke="#666" stroke-width="5" opacity="0.8" filter="url(#b2)" stroke-linecap="round"/><path d="M1205 400C1230 414 1290 414 1369 384" fill="none" stroke="#c6c6c6" stroke-width="4" opacity="0.8" filter="url(#b2)" stroke-linecap="round"/><path d="M1381 426C1420 455 1470 472 1521 465" fill="none" stroke="#c8c8c8" stroke-width="4" opacity="0.8" filter="url(#b2)" stroke-linecap="round"/></g><path d="M897 290C905 285 915 280 930 274C945 269 955 267 966 266.500C980 266 991 268 1004 272C1016 276 1034 288 1051 298C1067 307 1082 315 1095 321L1104 322L1188 343.500C1210 345 1245 346.500 1280 344C1303 342.500 1330 341 1354 340.500C1375 340.500 1391 342.500 1410 346C1427 350 1445 360 1463 370C1482 381 1500 392 1518 406C1536 421 1551 434 1565 446C1575 457 1583 471 1594 484C1605 497 1616 507 1640 524V622L1627 627C1615 632 1601 635 1570 631C1550 628 1520 625 1500 625.500H1463C1455 627 1446 631 1438 631C1425 631.500 1409 629 1380 624L1354 618L1318 607L1280 595L1245 582L1210 567.500L1173 552.500L1150 541L1120 526L1000 520L940 480L900 400ZM1203 392C1212 385 1220 381 1227 379C1245 374 1262 372 1282 371.700C1300 372 1318 373 1333 375.300C1346 377 1358 379 1369 383C1355 390 1338 396 1318 402.600C1305 407 1293 411 1282 411.700C1268 412.500 1255 412.500 1245 411.700C1235 411 1227 410 1220 408C1213 405 1208 402 1205 399ZM1378 408C1388 403 1398 401.500 1409 402.600C1421 404 1433 408 1445 413.500C1458 419 1470 425 1481.500 431.700C1492 438 1502 446 1510.500 453.500C1515 457 1519 461 1521.500 464.400C1514 468 1507 470 1500 469.800C1488 470 1475 470 1463 468C1453 465 1443 461 1434 457C1423 451 1412 445 1401.600 439C1394 434 1387 429 1381.600 424.400C1379 419 1378 413 1378 408ZM1138 471.600C1150 470 1161 469.500 1172.700 469.800C1190 470 1208 472 1227 475.300C1243 478 1259 481 1274 484.400C1285 487 1295 489 1303.500 491.600C1294 495 1284 498 1274 500.700C1264 504 1255 507 1245 509.800C1233 511 1221 511 1209 509.800C1196 508 1184 505 1172.700 500.700C1163 496 1154 491 1147 486.200C1143 481 1140 476 1138 471.600ZM1332.600 534.400C1339 529 1346 526 1354.400 525.400C1366 525 1378 527 1390.700 530.800C1403 535 1415 540 1427 545.300C1439 551 1451 557 1463.400 563.500C1475 569 1486 575 1496 581.700C1485 583 1474 583 1463.400 581.700C1451 580 1439 577 1427 574.400C1415 571 1403 567 1390.700 563.500C1378 560 1366 556 1354.400 552.600C1347 550 1341 548 1336 545.300ZM1510.600 509C1519 509 1527 510 1536 512.600C1548 515 1560 519 1572.400 523.500C1583 530 1592 537 1601.500 545.300C1609 550 1616 555 1640 566L1640 568C1625 566 1617 564 1608.700 561.700C1596 559 1584 556 1572.400 552.600C1560 547 1548 541 1536 534.400C1527 528 1520 522 1514 516.300Z" fill="none" stroke="#262626" stroke-opacity="0.45" stroke-width="1" /><path fill="#b6b6b6" d="M897 290C905 285 915 280 930 274C945 269 955 267 966 266.500C980 266 991 268 1004 272C1016 276 1034 288 1051 298C1067 307 1082 315 1095 321L1104 322L1188 343.500C1210 345 1245 346.500 1280 344C1303 342.500 1330 341 1354 340.500C1375 340.500 1391 342.500 1410 346C1427 350 1445 360 1463 370C1482 381 1500 392 1518 406C1536 421 1551 434 1565 446C1575 457 1583 471 1594 484C1605 497 1616 507 1640 524V533C1612 510 1590 486 1570 465C1550 446 1520 420 1490 400C1460 382 1420 364 1380 360C1340 357 1290 359 1240 364C1215 366 1195 367 1175 365C1140 361 1100 352 1062 337C1030 324 1000 305 975 295C950 286 925 285 903 291Z"/><path d="M905 290C925 283 950 283 975 293C1000 303 1030 322 1062 335C1100 350 1140 359 1175 363" fill="none" stroke="#8e8e8e" stroke-width="2" opacity="0.7" filter="url(#b2)" stroke-linecap="round"/><path fill="#555" d="M1104 358C1125 358 1150 362 1172 368C1180 380 1178 392 1170 398C1150 385 1125 370 1104 358Z"/><path fill="#bcbcbc" d="M1110 359.500C1130 360.500 1152 364 1169 369C1175 378 1175 388 1171 393C1167 385 1160 377 1150 373C1136 367 1122 363 1110 359.500Z"/><path fill="#6a6a6a" d="M1366 381L1380 386L1378 408L1385 424L1372 410Z"/><path fill="#6a6a6a" d="M1262 515C1285 513 1310 516 1335 523L1332 534L1338 547C1310 536 1285 524 1262 515Z"/><g clip-path="url(#cFin)"><path d="M1104.500 321C1105 315 1106 310 1108 306C1110 301 1114 297 1116 293C1118 286 1118 278 1117 270C1116 262 1111 253 1109.500 245C1109 240 1110 236 1112 232.600C1114 229 1118 227 1122 226.300C1130 226 1137 227 1145 228.800C1158 231 1170 234 1182.600 236.400C1193 239 1203 243 1213 247.700C1221 252 1228 258 1233 265.400C1238 272 1241 280 1242 288C1242.500 296 1242 304 1239.400 310.800C1237 317 1233 322 1228 326C1222 330 1215 333 1208 336C1201 339 1195 341 1188 343.600C1170 345 1140 336 1104.500 321Z" fill="#aeaeae"/><ellipse cx="1246" cy="295" rx="22" ry="55" fill="#6a6a6a" opacity="0.85" filter="url(#b8)" transform="rotate(-15 1246 295)"/><ellipse cx="1222" cy="338" rx="30" ry="9" fill="#5a5a5a" opacity="0.8" filter="url(#b4)" transform="rotate(-20 1222 338)"/><ellipse cx="1130" cy="250" rx="25" ry="30" fill="#b8b8b8" opacity="0.7" filter="url(#b8)"/></g><path d="M1104.500 321C1105 315 1106 310 1108 306C1110 301 1114 297 1116 293C1118 286 1118 278 1117 270C1116 262 1111 253 1109.500 245C1109 240 1110 236 1112 232.600C1114 229 1118 227 1122 226.300C1130 226 1137 227 1145 228.800C1158 231 1170 234 1182.600 236.400C1193 239 1203 243 1213 247.700C1221 252 1228 258 1233 265.400C1238 272 1241 280 1242 288C1242.500 296 1242 304 1239.400 310.800C1237 317 1233 322 1228 326C1222 330 1215 333 1208 336C1201 339 1195 341 1188 343.600C1170 345 1140 336 1104.500 321Z" fill="none" stroke="#262626" stroke-opacity="0.45" stroke-width="1" /><path fill="#a9a9a9" d="M813 342C802 346 793 354 790.500 364C789 372 795 380 805 385L813 386Z"/><path fill="#747474" d="M790 368C790 375 796 381 806 385L806 379C798 376 793 372 790 368Z"/><clipPath id="cPl"><path d="M802 486L940 478L1000 520L1090 530L1120 560L1060 660L940 700L820 700L760 690L740 600L770 540Z"/></clipPath><g clip-path="url(#cPl)"><path d="M802 486L940 478L1000 520L1090 530L1120 560L1060 660L940 700L820 700L760 690L740 600L770 540Z" fill="#959595"/><ellipse cx="880" cy="500" rx="90" ry="22" fill="#ababab" opacity="0.9" filter="url(#b8)" transform="rotate(-4 880 500)"/><ellipse cx="790" cy="600" rx="40" ry="60" fill="#8a8a8a" opacity="0.8" filter="url(#b8)"/></g><path d="M1106 522C1118 512 1130 500 1139 495C1150 505 1160 516 1165 524C1150 527 1135 527 1120 526Z" fill="#a2a2a2" stroke="#3a3a3a" stroke-opacity=".5" stroke-width="1"/><g clip-path="url(#cG)"><path d="M1000 560C1040 520 1100 510 1125 549C1140 570 1146 600 1135 614C1125 635 1100 650 1052 663C1020 670 990 668 970 655Z" fill="#868686"/><ellipse cx="1125" cy="645" rx="55" ry="45" fill="#454545" opacity="0.9" filter="url(#b14)"/><ellipse cx="1040" cy="560" rx="40" ry="25" fill="#999" opacity="0.6" filter="url(#b8)"/></g><path d="M1000 560C1040 520 1100 510 1125 549C1140 570 1146 600 1135 614C1125 635 1100 650 1052 663C1020 670 990 668 970 655Z" fill="none" stroke="#262626" stroke-opacity="0.5" stroke-width="1" /><g clip-path="url(#cD)"><path d="M806 727C806 700 830 670 880 650C930 632 1010 630 1051 654C1065 665 1071 680 1069.700 694C1068 720 1055 745 1037 760C1015 780 985 795 953 798C920 800 880 795 852 785C830 775 812 755 806 727Z" fill="#929292"/><ellipse cx="1070" cy="765" rx="70" ry="80" fill="#4c4c4c" opacity="0.9" filter="url(#b14)"/><ellipse cx="900" cy="735" rx="80" ry="45" fill="#a8a8a8" opacity="0.8" filter="url(#b14)"/><ellipse cx="930" cy="660" rx="110" ry="20" fill="#707070" opacity="0.8" filter="url(#b8)"/></g><path d="M806 727C806 700 830 670 880 650C930 632 1010 630 1051 654C1065 665 1071 680 1069.700 694C1068 720 1055 745 1037 760C1015 780 985 795 953 798C920 800 880 795 852 785C830 775 812 755 806 727Z" fill="none" stroke="#262626" stroke-opacity="0.5" stroke-width="1" /><g clip-path="url(#cE)"><path d="M717 654C725 640 760 630 800 630L930 650C935 670 932 690 924 701.600C915 712 900 716 888 716C860 718 835 714 815 709C785 702 760 700 743 690C730 682 718 668 717 654Z" fill="#878787"/><ellipse cx="900" cy="712" rx="60" ry="14" fill="#5a5a5a" opacity="0.9" filter="url(#b4)"/><ellipse cx="760" cy="660" rx="40" ry="20" fill="#959595" opacity="0.6" filter="url(#b8)"/></g><path d="M717 654C725 640 760 630 800 630L930 650C935 670 932 690 924 701.600C915 712 900 716 888 716C860 718 835 714 815 709C785 702 760 700 743 690C730 682 718 668 717 654Z" fill="none" stroke="#262626" stroke-opacity="0.5" stroke-width="1" /><g clip-path="url(#cA)"><path d="M684.500 512C684 498 690 487 699 480C712 471 732 466 753.600 465.400C776 465 800 472 815 483.600C826 492 831 503 830 513C829 523 826 530 822.600 534.500C812 545 797 551 779 552.600C765 556 750 557 735 555C722 553 712 550 706 545.400C695 538 686 525 684.500 512Z" fill="#909090"/><ellipse cx="825" cy="545" rx="35" ry="40" fill="#4c4c4c" opacity="0.9" filter="url(#b8)"/><ellipse cx="740" cy="485" rx="45" ry="18" fill="#ababab" opacity="0.9" filter="url(#b8)"/><ellipse cx="760" cy="560" rx="60" ry="10" fill="#6a6a6a" opacity="0.7" filter="url(#b4)"/></g><path d="M684.500 512C684 498 690 487 699 480C712 471 732 466 753.600 465.400C776 465 800 472 815 483.600C826 492 831 503 830 513C829 523 826 530 822.600 534.500C812 545 797 551 779 552.600C765 556 750 557 735 555C722 553 712 550 706 545.400C695 538 686 525 684.500 512Z" fill="none" stroke="#262626" stroke-opacity="0.5" stroke-width="1" /><g clip-path="url(#cC)"><path d="M799 596C799 578 810 560 826 545.400C845 528 875 516 906 512.700C940 509 975 512 997 520C1020 528 1040 542 1049.700 563.500C1054 580 1048 600 1040 612C1034 622 1027 630 1018.800 636.200C1000 652 975 664 942.500 669C910 672 880 668 851.700 658C835 652 820 642 811.700 629C803 618 799 607 799 596Z" fill="#8f8f8f"/><ellipse cx="1072" cy="645" rx="55" ry="75" fill="#484848" opacity="0.92" filter="url(#b14)"/><ellipse cx="890" cy="545" rx="90" ry="35" fill="#a0a0a0" opacity="0.8" filter="url(#b14)"/><ellipse cx="900" cy="672" rx="90" ry="12" fill="#5c5c5c" opacity="0.8" filter="url(#b4)"/></g><path d="M799 596C799 578 810 560 826 545.400C845 528 875 516 906 512.700C940 509 975 512 997 520C1020 528 1040 542 1049.700 563.500C1054 580 1048 600 1040 612C1034 622 1027 630 1018.800 636.200C1000 652 975 664 942.500 669C910 672 880 668 851.700 658C835 652 820 642 811.700 629C803 618 799 607 799 596Z" fill="none" stroke="#262626" stroke-opacity="0.5" stroke-width="1" /><g clip-path="url(#cB)"><path d="M704.500 563.500C706 553 716 545 731.800 545.400C752 548 768 560 779 574.400C795 595 806 620 811.700 643.500C816 665 818 685 815.300 701.600C813 715 805 725 793.500 727C775 727 757 712 742.700 694.300C725 670 712 640 706.300 614.400C703 596 702 578 704.500 563.500Z" fill="#909090"/><ellipse cx="740" cy="590" rx="25" ry="45" fill="#a6a6a6" opacity="0.8" filter="url(#b8)" transform="rotate(-25 740 590)"/><ellipse cx="815" cy="700" rx="18" ry="40" fill="#6a6a6a" opacity="0.8" filter="url(#b8)" transform="rotate(-15 815 700)"/></g><path d="M704.500 563.500C706 553 716 545 731.800 545.400C752 548 768 560 779 574.400C795 595 806 620 811.700 643.500C816 665 818 685 815.300 701.600C813 715 805 725 793.500 727C775 727 757 712 742.700 694.300C725 670 712 640 706.300 614.400C703 596 702 578 704.500 563.500Z" fill="none" stroke="#262626" stroke-opacity="0.5" stroke-width="1" /><g clip-path="url(#cDome)"><path d="M802.400 491C802 460 802 430 804 403.800C806 388 808 375 812 361.800C815 351 819 341 825 332.700C830 323 837 314 844.400 306.900C852 301 861 297 870.300 294C878 292 887 291 896 291.400C905 293 914 297 922 303.700C929 309 936 315 941.300 323C947 332 953 342 957.500 352C962 364 967 377 970.400 390.900C973 401 975 412 976.800 423.200L982 462L940 479.700C930 482 923 483 915.500 484.500C898 488 881 490 863.800 491C843 492 822 492 802.400 491Z" fill="#777"/><ellipse cx="990" cy="430" rx="70" ry="130" fill="#3a3a3a" opacity="0.95" filter="url(#b14)" transform="rotate(-10 990 430)"/><ellipse cx="815" cy="400" rx="30" ry="110" fill="#959595" opacity="0.9" filter="url(#b14)"/><ellipse cx="870" cy="300" rx="50" ry="14" fill="#a0a0a0" opacity="0.8" filter="url(#b8)"/></g><path d="M802.400 491C802 460 802 430 804 403.800C806 388 808 375 812 361.800C815 351 819 341 825 332.700C830 323 837 314 844.400 306.900C852 301 861 297 870.300 294C878 292 887 291 896 291.400C905 293 914 297 922 303.700C929 309 936 315 941.300 323C947 332 953 342 957.500 352C962 364 967 377 970.400 390.900C973 401 975 412 976.800 423.200L982 462L940 479.700C930 482 923 483 915.500 484.500C898 488 881 490 863.800 491C843 492 822 492 802.400 491Z" fill="none" stroke="#262626" stroke-opacity="0.5" stroke-width="1" /><g clip-path="url(#cF)"><path d="M977 545.400C966 537 955 529 946.200 519.900C938 510 934 499 933.400 487.200C933 475 938 464 946.200 454.500C950 449 955 444 960.700 440C970 433 981 427 993 423.200C1011 417 1031 414 1051 414C1068 414 1085 417 1099.600 423.200C1111 428 1121 434 1128.700 442.600C1134 449 1137 457 1137.700 465.200C1138 475 1136 485 1131.500 494.500C1123 509 1110 521 1095 530.800C1080 540 1060 550 1040 552C1020 553 1000 552 977 545.400Z" fill="#8e8e8e"/><ellipse cx="1135" cy="520" rx="50" ry="60" fill="#444" opacity="0.95" filter="url(#b14)"/><ellipse cx="1010" cy="450" rx="70" ry="25" fill="#a6a6a6" opacity="0.8" filter="url(#b14)"/><ellipse cx="1040" cy="556" rx="70" ry="14" fill="#565656" opacity="0.9" filter="url(#b4)"/></g><path d="M977 545.400C966 537 955 529 946.200 519.900C938 510 934 499 933.400 487.200C933 475 938 464 946.200 454.500C950 449 955 444 960.700 440C970 433 981 427 993 423.200C1011 417 1031 414 1051 414C1068 414 1085 417 1099.600 423.200C1111 428 1121 434 1128.700 442.600C1134 449 1137 457 1137.700 465.200C1138 475 1136 485 1131.500 494.500C1123 509 1110 521 1095 530.800C1106 536 1116 542 1124 549C1133 558 1140 569 1142.400 581.700C1144 593 1141 604 1135 614.400C1128 626 1118 636 1106 643.500C1090 653 1071 660 1051.500 663.500C1040 666 1027 668 1015.200 668.200C1003 668 990 666 978.900 661.600C966 657 955 651 946.200 643.500C938 635 931 625 928 614.400C926 604 927 594 931.600 585.300C936 576 944 567 953.400 559.900C960 554 968 549 977 545.400Z" fill="none" stroke="#58e8a0" stroke-width="1.500" stroke-linejoin="round" opacity=".6"/><path d="M977 545.400C966 537 955 529 946.200 519.900C938 510 934 499 933.400 487.200C933 475 938 464 946.200 454.500C950 449 955 444 960.700 440C970 433 981 427 993 423.200C1011 417 1031 414 1051 414C1068 414 1085 417 1099.600 423.200C1111 428 1121 434 1128.700 442.600C1134 449 1137 457 1137.700 465.200C1138 475 1136 485 1131.500 494.500C1123 509 1110 521 1095 530.800C1106 536 1116 542 1124 549C1133 558 1140 569 1142.400 581.700C1144 593 1141 604 1135 614.400C1128 626 1118 636 1106 643.500C1090 653 1071 660 1051.500 663.500C1040 666 1027 668 1015.200 668.200" fill="none" stroke="#45e594" stroke-width="2.100" stroke-linejoin="round"/><circle cx="1019.5" cy="511.500" r="2.600" fill="#45e594" stroke="#1a3a2a" stroke-width=".8"/><path d="M770.3 -92.3L2165.2 -26.6M770.3 -92.3L-156.7 -9.0M759.5 -91.3L2177.7 -23.3M781.8 -91.7L-193.7 -2.3M748.5 -90.3L2190.7 -19.8M793.5 -91.2L-183.3 0.3M737.1 -89.3L2162.5 -18.2M805.3 -90.6L-172.5 2.9M725.5 -88.3L2175.6 -14.4M817.3 -90.1L-161.5 5.7M713.6 -87.2L2189.4 -10.5M829.5 -89.5L-150.1 8.5M701.4 -86.1L2159.4 -8.7M841.9 -88.9L-190.9 16.7M688.8 -85.0L2173.2 -4.5M854.4 -88.3L-179.2 19.9M675.9 -83.8L2187.9 0.0M867.2 -87.7L-167.2 23.2M662.6 -82.6L2155.9 2.0M880.1 -87.1L-154.7 26.6M649.0 -81.4L2170.6 6.9M893.2 -86.5L-141.8 30.1M634.9 -80.1L2186.2 12.0M906.5 -85.9L-187.4 40.6M620.5 -78.8L2151.8 14.3M920.0 -85.2L-174.1 44.6M605.6 -77.5L2167.5 19.9M933.7 -84.6L-160.4 48.8M590.3 -76.1L2184.2 25.8M947.7 -83.9L-146.1 53.2M574.5 -74.7L2147.2 28.4M961.8 -83.3L-197.5 66.3M558.3 -73.2L2164.0 34.9M976.2 -82.6L-182.8 71.4M541.5 -71.7L2181.9 41.8M990.8 -81.9L-167.5 76.7M524.2 -70.2L2141.8 45.0M1005.6 -81.2L-151.5 82.3M506.3 -68.6L2159.8 52.6M1020.7 -80.5L-134.8 88.2M487.9 -66.9L2179.2 60.7M1036.0 -79.8L-194.0 105.8M468.8 -65.2L2135.4 64.5M1051.5 -79.0L-176.7 112.8M449.1 -63.4L2154.9 73.6M1067.3 -78.3L-158.6 120.2M428.8 -61.6L2176.0 83.4M1083.4 -77.5L-139.4 127.9M407.7 -59.7L2198.8 94.0M1099.8 -76.8L-119.2 136.1M385.8 -57.7L2149.0 98.9M1116.4 -76.0L-189.1 161.3M363.2 -55.7L2172.1 110.9M1133.3 -75.2L-168.1 171.5M339.7 -53.6L2197.3 124.1M1150.5 -74.4L-145.8 182.2M315.3 -51.4L2141.6 130.2M1167.9 -73.6L-122.0 193.7M290.0 -49.1L2167.2 145.2M1185.7 -72.7L-96.6 206.0M263.8 -46.8L2195.4 161.9M1203.8 -71.9L-181.8 244.7M236.4 -44.3L2132.3 169.7M1222.3 -71.0L-155.0 260.8M208.0 -41.7L2160.9 189.1M1241.0 -70.1L-126.1 278.0M178.3 -39.1L2193.0 210.8M1260.1 -69.2L-94.7 296.8M147.4 -36.3L2120.2 221.2M1279.5 -68.3L-60.6 317.2M115.2 -33.4L2152.6 247.1M1299.3 -67.4L-169.5 384.4M81.5 -30.4L2189.6 276.8M1319.5 -66.4L-132.6 413.4M46.3 -27.2L2103.8 291.1M1340.0 -65.5L-91.6 445.6M9.5 -23.9L2141.2 327.6M1361.0 -64.5L-45.8 481.5M-29.1 -20.4L2184.9 370.3M1382.3 -63.5L-195.7 607.6M-69.6 -16.8L2080.3 391.4M1404.0 -62.4L-144.7 665.8M-112.1 -13.0L2124.2 446.5M1426.2 -61.4L-85.5 733.6M-156.7 -9.0L2177.8 513.6M1448.8 -60.3L-15.9 813.3M-193.7 -2.3L2043.6 547.6M1471.8 -59.2L67.2 908.4M-190.9 16.7L2096.6 640.2M1495.3 -58.1L168.2 1023.8M-187.4 40.6L2165.4 760.1M1519.3 -57.0L293.3 1167.0M-197.5 66.3L1978.6 824.4M1543.8 -55.9L682.3 1053.4M-194.0 105.8L2043.7 1011.3M1568.8 -54.7L874.4 1204.2M-189.1 161.3L2139.0 1285.0M1594.3 -53.5L1222.6 1084.4M-181.8 244.7L1488.6 1243.4M1620.3 -52.3L1488.6 1243.4M-169.5 384.4L874.4 1204.2M1646.9 -51.0L1791.0 1117.0M-195.7 607.6L293.3 1167.0M1674.0 -49.7L2139.0 1285.0M1701.8 -48.4L2165.4 760.1M1730.2 -47.1L2177.8 513.6M1759.2 -45.7L2184.9 370.3M1788.8 -44.3L2189.6 276.8M1819.1 -42.9L2193.0 210.8M1850.2 -41.4L2195.4 161.9M1881.9 -39.9L2197.3 124.1M1914.4 -38.4L2198.8 94.0M1947.7 -36.8L2179.2 60.7M1981.7 -35.2L2181.9 41.8M2016.6 -33.6L2184.2 25.8M2052.4 -31.9L2186.2 12.0M2089.1 -30.2L2187.9 0.0M2126.7 -28.4L2189.4 -10.5M2165.2 -26.6L2190.7 -19.8" stroke="#000" stroke-opacity=".07" stroke-width="1" fill="none" clip-path="url(#mclip)"/><g font-family="'DejaVu Sans','Liberation Sans',sans-serif" style="letter-spacing:-0.45px"><filter id="tb2" x="-10%" y="-30%" width="120%" height="160%"><feGaussianBlur stdDeviation="1"/></filter><text x="442" y="153" font-size="13.5" fill="#000" fill-opacity=".55" filter="url(#tb2)">User Perspective</text><text x="441" y="152" font-size="13.5" fill="#fff">User Perspective</text><text x="442" y="176" font-size="13.5" fill="#000" fill-opacity=".55" filter="url(#tb2)">(1) Scene Collection | Cube.004</text><text x="441" y="175" font-size="13.5" fill="#fff">(1) Scene Collection | Cube.004</text><circle cx="1583.500" cy="166" r="9" fill="#8a6078" fill-opacity=".55" stroke="#d9485f" stroke-width="1.3"/><circle cx="1529.500" cy="176.500" r="9" fill="#6e934f" fill-opacity=".55" stroke="#86c225" stroke-width="1.3"/><circle cx="1565" cy="219.500" r="9" fill="#4f7fb3" fill-opacity=".55" stroke="#3b8ae6" stroke-width="1.3"/><path d="M1566 188L1565.500 157" stroke="#2d8cf0" stroke-width="2.200"/><path d="M1566 188L1546 210" stroke="#e8435a" stroke-width="2.200"/><path d="M1566 188L1600 199.500" stroke="#7fc31c" stroke-width="2.200"/><circle cx="1565.500" cy="156.500" r="10" fill="#2d8cf0"/><text x="1565.5" y="161.5" font-size="13" fill="#111" text-anchor="middle" letter-spacing="0">Z</text><circle cx="1600" cy="199.500" r="10" fill="#7fc31c"/><text x="1600" y="204.5" font-size="13" fill="#111" text-anchor="middle" letter-spacing="0">Y</text><circle cx="1546" cy="210" r="10" fill="#e8435a"/><text x="1546" y="215" font-size="13" fill="#111" text-anchor="middle" letter-spacing="0">X</text><circle cx="1599" cy="256.5" r="17" fill="#323c44" fill-opacity=".72"/><svg x="1588" y="245.5" width="22" height="22" viewBox="0 0 20 20"><circle cx="12.5" cy="8" r="6.3" fill="#e4e4e4"/><path d="M8 13L2.5 18.5" fill="none" stroke="#e4e4e4" stroke-width="2.4" stroke-linecap="round" stroke-linejoin="round" /><path d="M12.5 4.8V11.2M9.3 8H15.7" fill="none" stroke="#3b4852" stroke-width="1.4" stroke-linecap="round" stroke-linejoin="round" /></svg><circle cx="1599" cy="294" r="17" fill="#323c44" fill-opacity=".72"/><svg x="1588" y="283" width="22" height="22" viewBox="0 0 20 20"><path d="M5.2 10.5L3 8.4C2 7.4 3.3 6 4.4 7L6.2 8.6L5.6 4C5.4 2.6 7.4 2.2 7.7 3.7L8.6 7.6L8.8 2.4C8.9 1 11 1 11 2.4L11.2 7.6L12.6 3.4C13 2 15 2.6 14.6 4L13.6 8.4L15.6 6C16.6 5 18 6 17.2 7.2C15.5 10 15.5 12 15 14.5C14.5 17.5 12.5 18.5 10.5 18.5C7.5 18.5 6.5 16.5 5.2 10.5Z" fill="#e4e4e4"/></svg><circle cx="1599" cy="332" r="17" fill="#323c44" fill-opacity=".72"/><svg x="1588" y="321" width="22" height="22" viewBox="0 0 20 20"><circle cx="6" cy="5.8" r="3.8" fill="#e4e4e4"/><circle cx="13.2" cy="5" r="4.6" fill="#e4e4e4"/><rect x="4.5" y="9.5" width="10.5" height="8" rx="1.2" fill="#e4e4e4"/><path d="M15 12.5L19 10.5V17.5L15 15.5Z" fill="#e4e4e4"/><path d="M1.5 11.5h3v3h-3z" fill="#e4e4e4"/><circle cx="6" cy="5.8" r="1.2" fill="#3b4852"/><circle cx="13.2" cy="5" r="1.5" fill="#3b4852"/></svg><circle cx="1599" cy="369.5" r="17" fill="#323c44" fill-opacity=".72"/><svg x="1588" y="358.5" width="22" height="22" viewBox="0 0 20 20"><path d="M5.5 3H14.5L18.5 17H1.5Z" fill="#e4e4e4"/><path d="M8.5 3L7 17M11.5 3L13 17M4.4 7.2H15.6M3.2 11.6H16.8" stroke="#3b4852" stroke-width="1.4"/></svg><path d="M881.3 612.0L892.0 616.4" stroke="#111" stroke-width="1.1"/><path d="M912.0 623.6L922.7 628.4" stroke="#111" stroke-width="1.1"/><path d="M887.0 635.6L895.0 627.3" stroke="#111" stroke-width="1.1"/><path d="M909.3 612.0L916.5 605.0" stroke="#111" stroke-width="1.1"/><path d="M899.0 602.2L901.0 609.5" stroke="#111" stroke-width="1.1"/><path d="M902.7 630.0L904.2 637.4" stroke="#111" stroke-width="1.1"/><path d="M895.0 617.5L898.5 618.8" stroke="#111" stroke-width="1.1"/><path d="M905.5 621.2L909.0 622.5" stroke="#111" stroke-width="1.1"/><path d="M897.5 624.7L900.0 622.2" stroke="#111" stroke-width="1.1"/><path d="M904.0 617.8L906.5 615.3" stroke="#111" stroke-width="1.1"/><path d="M901.2 613.5L901.7 617.0" stroke="#111" stroke-width="1.1"/><path d="M902.2 623.0L902.6 626.5" stroke="#111" stroke-width="1.1"/><circle cx="902" cy="620" r="11.500" fill="none" stroke="#fff" stroke-width="1.4"/><circle cx="902" cy="620" r="11.500" fill="none" stroke="#e8262c" stroke-width="1.4" stroke-dasharray="4.5 4.5"/><rect x="427" y="145.500" width="12" height="16" rx="3" fill="#4a5963" fill-opacity=".8"/><path d="M432 149.500L436 153.500L432 157.500" stroke="#aab" stroke-width="1.200" fill="none"/><rect x="1617" y="145.500" width="14" height="16" rx="3" fill="#4a5963" fill-opacity=".8"/><path d="M1625 149.500L1621 153.500L1625 157.500" stroke="#aab" stroke-width="1.200" fill="none"/></g></svg></div>
<div class="a" style="left:430px;top:63px;width:1197.5px;height:31px;background:#424242;border-radius:5px 5px 0 0"></div>
<div class="a" style="left:441px;top:67px;width:38px;height:23px;background:#2b2b2b;border-radius:4px"></div>
<svg class="a" style="left:446px;top:69px" width="19" height="19" viewBox="0 0 20 20"><path d="M2 10.5H15M1 14.5H16M6.5 8L4 18M12 11L13 18" fill="none" stroke="#e6e6e6" stroke-width="1.4" stroke-linecap="round" stroke-linejoin="round" /><circle cx="12.5" cy="5.5" r="4.2" fill="#e6e6e6"/><path d="M10.2 5.2A2.6 2.6 0 0 1 12.6 2.9" fill="none" stroke="#555" stroke-width="1" stroke-linecap="round" stroke-linejoin="round" /></svg>
<svg class="a" style="left:461px;top:70px" width="18" height="18" viewBox="0 0 20 20"><path d="M7.4 8.3L11.4 12.2L15.4 8.3" fill="none" stroke="#e6e6e6" stroke-width="1.4" stroke-linecap="round" stroke-linejoin="round" /></svg>
<div class="a" style="left:487px;top:67px;width:135px;height:23px;background:#2b2b2b;border-radius:4px"></div>
<svg class="a" style="left:492px;top:69px" width="19" height="19" viewBox="0 0 20 20"><rect x="5.5" y="5.5" width="9" height="9" fill="#e6e6e6"/><path d="M2 6V2.5H6M14 2.5H18V6M18 14V17.5H14M6 17.5H2V14" fill="none" stroke="#e6e6e6" stroke-width="1.3" stroke-linecap="round" stroke-linejoin="round" /></svg>
<div class="a t ts" style="left:518px;top:70px;line-height:16px;">Object Mode</div>
<svg class="a" style="left:603px;top:70px" width="18" height="18" viewBox="0 0 20 20"><path d="M7.4 8.3L11.4 12.2L15.4 8.3" fill="none" stroke="#e6e6e6" stroke-width="1.4" stroke-linecap="round" stroke-linejoin="round" /></svg>
<div class="a t ts" style="left:638px;top:70px;line-height:16px;">View</div>
<div class="a t ts" style="left:688px;top:70px;line-height:16px;">Select</div>
<div class="a t ts" style="left:746px;top:70px;line-height:16px;">Add</div>
<div class="a t ts" style="left:790px;top:70px;line-height:16px;">Object</div>
<div class="a t ts" style="left:850px;top:70px;line-height:16px;">GIS</div>
<svg class="a" style="left:448px;top:99px" width="25" height="25" viewBox="0 0 26 26"><rect x="1.5" y="1.5" width="23" height="23" rx="2" fill="none" stroke="#e8a530" stroke-width="1.8" stroke-dasharray="5 2.6"/><path d="M9 6.5L19 15L13.5 15.5L10.5 20.5Z" fill="#e0e0e0"/></svg>
<div class="a" style="left:483.5px;top:99px;width:121.5px;height:24.5px;background:#545454;border-radius:4px;border:1px solid #2a2a2a;overflow:hidden"></div>
<div class="a" style="left:484.5px;top:100px;width:23.5px;height:22.5px;background:#5680c2;border-radius:3px 0 0 3px"></div>
<svg class="a" style="left:484.3px;top:99.3px" width="24" height="24" viewBox="0 0 24 24"><rect x="3.5" y="3.5" width="17" height="17" fill="none" stroke="#fff" stroke-width="1.6" stroke-dasharray="3 2"/></svg>
<div class="a" style="left:508.1px;top:100px;width:1px;height:22.5px;background:#3a3a3a"></div>
<svg class="a" style="left:508.40000000000003px;top:99.3px" width="24" height="24" viewBox="0 0 24 24"><path d="M9 4H20V15H15V20H4V9H9Z" fill="#e0e0e0"/></svg>
<div class="a" style="left:532.2px;top:100px;width:1px;height:22.5px;background:#3a3a3a"></div>
<svg class="a" style="left:532.5px;top:99.3px" width="24" height="24" viewBox="0 0 24 24"><path d="M9 4H20V15H15V9H9Z" fill="#e0e0e0"/><path d="M9 9H4V20H15V15" fill="none" stroke="#e0e0e0" stroke-width="1.5" stroke-dasharray="2.6 2"/></svg>
<div class="a" style="left:556.3px;top:100px;width:1px;height:22.5px;background:#3a3a3a"></div>
<svg class="a" style="left:556.5999999999999px;top:99.3px" width="24" height="24" viewBox="0 0 24 24"><path d="M9 4H20V15H15V20H4V9H9Z" fill="#e0e0e0"/><rect x="9.8" y="9.8" width="4.6" height="4.6" fill="#545454"/></svg>
<div class="a" style="left:580.4px;top:100px;width:1px;height:22.5px;background:#3a3a3a"></div>
<svg class="a" style="left:580.6999999999999px;top:99.3px" width="24" height="24" viewBox="0 0 24 24"><rect x="8" y="8" width="8" height="8" fill="#e0e0e0"/><rect x="3.5" y="3.5" width="17" height="17" fill="none" stroke="#e0e0e0" stroke-width="1.5" stroke-dasharray="2.6 2"/></svg>
<div class="a" style="left:1537px;top:99px;width:82px;height:24.5px;background:#2b2b2b;border-radius:4px;border:1px solid #1f1f1f"></div>
<div class="a t ts" style="left:1547px;top:103px;line-height:16px;">Options</div>
<svg class="a" style="left:1599px;top:103px" width="18" height="18" viewBox="0 0 20 20"><path d="M7.4 8.3L11.4 12.2L15.4 8.3" fill="none" stroke="#e6e6e6" stroke-width="1.4" stroke-linecap="round" stroke-linejoin="round" /></svg>
<div class="a" style="left:902px;top:67px;width:98px;height:23px;background:#2b2b2b;border-radius:4px"></div>
<svg class="a" style="left:906px;top:69px" width="20" height="20" viewBox="0 0 20 20"><path d="M5 3V15.5H17.5M5 15.5L13 8" fill="none" stroke="#e6e6e6" stroke-width="1.4" stroke-linecap="round" stroke-linejoin="round" /><path d="M2.5 5.5L5 2.5L7.5 5.5M15 13L17.8 15.5L15 18M10.5 8H13V10.5" fill="none" stroke="#e6e6e6" stroke-width="1.4" stroke-linecap="round" stroke-linejoin="round" /><circle cx="5" cy="15.5" r="2" fill="#2c2c2c" stroke="#e6e6e6" stroke-width="1.3"/></svg>
<div class="a t ts" style="left:934px;top:70px;line-height:16px;">Global</div>
<svg class="a" style="left:979px;top:70px" width="18" height="18" viewBox="0 0 20 20"><path d="M7.4 8.3L11.4 12.2L15.4 8.3" fill="none" stroke="#e6e6e6" stroke-width="1.4" stroke-linecap="round" stroke-linejoin="round" /></svg>
<div class="a" style="left:1008px;top:67px;width:38px;height:23px;background:#2b2b2b;border-radius:4px"></div>
<svg class="a" style="left:1011px;top:69px" width="20" height="20" viewBox="0 0 20 20"><circle cx="7.5" cy="12.5" r="5" fill="none" stroke="#e6e6e6" stroke-width="1.5" stroke-linecap="round" stroke-linejoin="round" /><circle cx="13" cy="7" r="5" fill="none" stroke="#e6e6e6" stroke-width="1.5" stroke-linecap="round" stroke-linejoin="round" /><circle cx="10.2" cy="9.8" r="1.6" fill="#e6e6e6"/></svg>
<svg class="a" style="left:1027px;top:70px" width="18" height="18" viewBox="0 0 20 20"><path d="M7.4 8.3L11.4 12.2L15.4 8.3" fill="none" stroke="#e6e6e6" stroke-width="1.4" stroke-linecap="round" stroke-linejoin="round" /></svg>
<div class="a" style="left:1054px;top:67px;width:24px;height:23px;background:#575757;border-radius:4px 0 0 4px"></div>
<svg class="a" style="left:1056px;top:69px" width="20" height="20" viewBox="0 0 20 20"><path d="M3.5 6.5C6 2 13 1.5 15.5 6C17.5 10 14 13 11 16.5L8.2 14C10.5 11.5 13.5 9.5 12 7.2C10.8 5.5 8 5.8 6.5 8.5Z" fill="none" stroke="#c8c8c8" stroke-width="1.4" stroke-linecap="round" stroke-linejoin="round" /></svg>
<div class="a" style="left:1078px;top:67px;width:39px;height:23px;background:#2b2b2b;border-radius:0 4px 4px 0"></div>
<svg class="a" style="left:1080px;top:69px" width="20" height="20" viewBox="0 0 20 20"><path d="M1.5 14H15.5M1.5 10.5V17.5M6 11.5V16.5M10.5 11.5V16.5M15.5 10.5V17.5" fill="none" stroke="#e6e6e6" stroke-width="1.4" stroke-linecap="round" stroke-linejoin="round" /><rect x="12.5" y="2.5" width="5" height="5" fill="#e6e6e6"/></svg>
<svg class="a" style="left:1097px;top:70px" width="18" height="18" viewBox="0 0 20 20"><path d="M7.4 8.3L11.4 12.2L15.4 8.3" fill="none" stroke="#e6e6e6" stroke-width="1.4" stroke-linecap="round" stroke-linejoin="round" /></svg>
<div class="a" style="left:1125px;top:67px;width:24px;height:23px;background:#575757;border-radius:4px 0 0 4px"></div>
<svg class="a" style="left:1127px;top:69px" width="20" height="20" viewBox="0 0 20 20"><circle cx="10" cy="10" r="7.2" fill="none" stroke="#bdbdbd" stroke-width="1.2" stroke-linecap="round" stroke-linejoin="round" /><circle cx="10" cy="10" r="2.3" fill="#bdbdbd"/></svg>
<div class="a" style="left:1149px;top:67px;width:39px;height:23px;background:#333;border-radius:0 4px 4px 0"></div>
<svg class="a" style="left:1151px;top:69px" width="20" height="20" viewBox="0 0 20 20"><path d="M2 17C7 17 7.5 3 10 3C12.5 3 13 17 18 17" fill="none" stroke="#bdbdbd" stroke-width="1.4" stroke-linecap="round" stroke-linejoin="round" /></svg>
<svg class="a" style="left:1168px;top:70px" width="18" height="18" viewBox="0 0 20 20"><path d="M7.4 8.3L11.4 12.2L15.4 8.3" fill="none" stroke="#5a5a5a" stroke-width="1.4" stroke-linecap="round" stroke-linejoin="round" /></svg>
<div class="a" style="left:1307px;top:67px;width:38px;height:23px;background:#2b2b2b;border-radius:4px"></div>
<svg class="a" style="left:1309px;top:69px" width="20" height="20" viewBox="0 0 20 20"><path d="M5.5 6.5C8 2 15 2 18 6.5C15 10.5 8.5 10.5 5.5 6.5Z" fill="#e6e6e6"/><circle cx="11.8" cy="6.3" r="2.4" fill="#2c2c2c"/><circle cx="11.8" cy="6.3" r="1" fill="#e6e6e6"/><path d="M2 8.5L11 13L7 14.2L5.5 18.5Z" fill="#e6e6e6"/></svg>
<svg class="a" style="left:1326px;top:70px" width="18" height="18" viewBox="0 0 20 20"><path d="M7.4 8.3L11.4 12.2L15.4 8.3" fill="none" stroke="#e6e6e6" stroke-width="1.4" stroke-linecap="round" stroke-linejoin="round" /></svg>
<div class="a" style="left:1353px;top:67px;width:23.5px;height:23px;background:#5680c2;border-radius:4px 0 0 4px"></div>
<svg class="a" style="left:1355px;top:69px" width="20" height="20" viewBox="0 0 20 20"><path d="M3 3.5C10 4 15 9 15.5 17" fill="none" stroke="#fff" stroke-width="1.4" stroke-linecap="round" stroke-linejoin="round" /><path d="M5 15L16 4M11.5 3.5H16.5V8.5" fill="none" stroke="#fff" stroke-width="1.4" stroke-linecap="round" stroke-linejoin="round" /><circle cx="5" cy="15" r="2.2" fill="#5680c2" stroke="#fff" stroke-width="1.3"/></svg>
<div class="a" style="left:1376.5px;top:67px;width:24.5px;height:23px;background:#2b2b2b;border-radius:0 4px 4px 0"></div>
<svg class="a" style="left:1379.5px;top:70px" width="18" height="18" viewBox="0 0 20 20"><path d="M7.4 8.3L11.4 12.2L15.4 8.3" fill="none" stroke="#e6e6e6" stroke-width="1.4" stroke-linecap="round" stroke-linejoin="round" /></svg>
<div class="a" style="left:1409px;top:67px;width:23.5px;height:23px;background:#5680c2;border-radius:4px 0 0 4px"></div>
<svg class="a" style="left:1411px;top:69px" width="20" height="20" viewBox="0 0 20 20"><circle cx="12.5" cy="7.5" r="5.8" fill="#fff"/><circle cx="7.5" cy="12.5" r="5.3" fill="none" stroke="#fff" stroke-width="1.4"/><path d="M7 8A5 5 0 0 0 12 13" fill="none" stroke="#5680c2" stroke-width="1.2" stroke-linecap="round" stroke-linejoin="round" /></svg>
<div class="a" style="left:1432.5px;top:67px;width:24.5px;height:23px;background:#2b2b2b;border-radius:0 4px 4px 0"></div>
<svg class="a" style="left:1435.5px;top:70px" width="18" height="18" viewBox="0 0 20 20"><path d="M7.4 8.3L11.4 12.2L15.4 8.3" fill="none" stroke="#e6e6e6" stroke-width="1.4" stroke-linecap="round" stroke-linejoin="round" /></svg>
<div class="a" style="left:1464.5px;top:67px;width:23.5px;height:23px;background:#575757;border-radius:4px"></div>
<svg class="a" style="left:1466.5px;top:69px" width="20" height="20" viewBox="0 0 20 20"><path d="M6.5 5V2.5H17.5V13.5H15" fill="none" stroke="#e6e6e6" stroke-width="1.4" stroke-linecap="round" stroke-linejoin="round" /><rect x="2.5" y="5.5" width="12" height="12" fill="none" stroke="#e6e6e6" stroke-width="1.4" stroke-linecap="round" stroke-linejoin="round" /><path d="M6 9V13.5H7.5M9.5 13.5H11.5" fill="none" stroke="#e6e6e6" stroke-width="1.3" stroke-linecap="round" stroke-linejoin="round" /></svg>
<div class="a" style="left:1495.5px;top:67px;width:24px;height:23px;background:#575757;border-radius:4px 0 0 4px"></div>
<svg class="a" style="left:1497.5px;top:69px" width="20" height="20" viewBox="0 0 20 20"><circle cx="10" cy="10" r="7.5" fill="none" stroke="#d0d0d0" stroke-width="1.2" stroke-linecap="round" stroke-linejoin="round" /><path d="M2.5 10H17.5M10 2.5V17.5M4 5.5C8 8 12 8 16 5.5M4 14.5C8 12 12 12 16 14.5" fill="none" stroke="#d0d0d0" stroke-width="1.1" stroke-linecap="round" stroke-linejoin="round" /></svg>
<div class="a" style="left:1520px;top:67px;width:23.5px;height:23px;background:#5680c2;border-radius:0"></div>
<svg class="a" style="left:1522px;top:69px" width="20" height="20" viewBox="0 0 20 20"><circle cx="10" cy="10" r="7.8" fill="#fff"/></svg>
<div class="a" style="left:1544px;top:67px;width:23.5px;height:23px;background:#575757;border-radius:0"></div>
<svg class="a" style="left:1546px;top:69px" width="20" height="20" viewBox="0 0 20 20"><circle cx="10" cy="10" r="7.5" fill="none" stroke="#d0d0d0" stroke-width="1.2" stroke-linecap="round" stroke-linejoin="round" /><path d="M10 10V2.5A7.5 7.5 0 0 0 3.5 13.7Z" fill="#d0d0d0"/><path d="M10 10L16.5 13.7" fill="none" stroke="#d0d0d0" stroke-width="1.2" stroke-linecap="round" stroke-linejoin="round" /><path d="M5 15.5L7 17M8 16.5l1 1.2M11 17l.5.8" fill="none" stroke="#d0d0d0" stroke-width="0.9" stroke-linecap="round" stroke-linejoin="round" /></svg>
<div class="a" style="left:1568px;top:67px;width:23.5px;height:23px;background:#575757;border-radius:0"></div>
<svg class="a" style="left:1570px;top:69px" width="20" height="20" viewBox="0 0 20 20"><circle cx="10" cy="10" r="7.5" fill="none" stroke="#d0d0d0" stroke-width="1.2" stroke-linecap="round" stroke-linejoin="round" /><path d="M5 9A5.2 5.2 0 0 1 10 4.6" fill="none" stroke="#d0d0d0" stroke-width="1.3" stroke-linecap="round" stroke-linejoin="round" /><path d="M12 16.5l.6.9M14 15.5l.8.9M15.6 14l.9.7" fill="none" stroke="#d0d0d0" stroke-width="0.9" stroke-linecap="round" stroke-linejoin="round" /></svg>
<div class="a" style="left:1543.5px;top:67px;width:0.8px;height:23px;background:#3a3a3a"></div>
<div class="a" style="left:1567.5px;top:67px;width:0.8px;height:23px;background:#3a3a3a"></div>
<div class="a" style="left:1592px;top:67px;width:24px;height:23px;background:#2b2b2b;border-radius:0 4px 4px 0"></div>
<svg class="a" style="left:1595px;top:70px" width="18" height="18" viewBox="0 0 20 20"><path d="M7.4 8.3L11.4 12.2L15.4 8.3" fill="none" stroke="#e6e6e6" stroke-width="1.4" stroke-linecap="round" stroke-linejoin="round" /></svg>
<div class="a" style="left:1630px;top:63px;width:290px;height:299px;background:#2b2b2b;border-radius:5px 0 0 5px;overflow:hidden"></div>
<div class="a" style="left:1630px;top:95px;width:290px;height:25px;background:#2b2b2b;overflow:hidden"></div>
<div class="a" style="left:1630px;top:120px;width:290px;height:25px;background:#303030;overflow:hidden"></div>
<div class="a" style="left:1630px;top:145px;width:290px;height:25px;background:#2b2b2b;overflow:hidden"></div>
<div class="a" style="left:1630px;top:170px;width:290px;height:25px;background:#303030;overflow:hidden"></div>
<div class="a" style="left:1630px;top:195px;width:290px;height:25px;background:#2b2b2b;overflow:hidden"></div>
<div class="a" style="left:1630px;top:220px;width:290px;height:25px;background:#303030;overflow:hidden"></div>
<div class="a" style="left:1630px;top:245px;width:290px;height:25px;background:#2b2b2b;overflow:hidden"></div>
<div class="a" style="left:1630px;top:270px;width:290px;height:25px;background:#303030;overflow:hidden"></div>
<div class="a" style="left:1630px;top:295px;width:290px;height:25px;background:#3b5689;overflow:hidden"></div>
<div class="a" style="left:1630px;top:320px;width:290px;height:25px;background:#303030;overflow:hidden"></div>
<div class="a" style="left:1630px;top:345px;width:290px;height:17px;background:#2b2b2b;overflow:hidden"></div>
<div class="a" style="left:1655.5px;top:97.5px;width:24.5px;height:22.5px;background:#4a4a4a;border:1px solid #6a6a6a;border-radius:5px"></div>
<svg class="a" style="left:1659px;top:100px" width="17.5" height="17.5" viewBox="0 0 20 20"><rect x="2" y="2.5" width="16" height="4.5" fill="#d8d8d8"/><path d="M3 8.2H17V18H3Z" fill="#d8d8d8"/><rect x="7.5" y="10.3" width="5" height="2.2" rx="1" fill="#2e2e2e"/></svg>
<div class="a t" style="left:1685.5px;top:100.5px;line-height:16px;">Scene Collection</div>
<svg class="a" style="left:1684px;top:125px" width="17.5" height="17.5" viewBox="0 0 20 20"><rect x="2" y="2.5" width="16" height="4.5" fill="#d8d8d8"/><path d="M3 8.2H17V18H3Z" fill="#d8d8d8"/><rect x="7.5" y="10.3" width="5" height="2.2" rx="1" fill="#2e2e2e"/></svg>
<div class="a t" style="left:1710.5px;top:125.5px;line-height:16px;opacity:1">Collection</div>
<svg class="a" style="left:1837.5px;top:125px" width="16" height="16" viewBox="0 0 20 20"><rect x="2" y="2.5" width="16" height="16" rx="2.5" fill="#e6e6e6"/><path d="M5.2 10.5L8.6 14L15 6.5" fill="none" stroke="#222" stroke-width="2.4" stroke-linecap="round" stroke-linejoin="round"/></svg>
<svg class="a" style="left:1861.5px;top:124.5px" width="17" height="17" viewBox="0 0 20 20"><path d="M1 10C4.5 3.5 15.5 3.5 19 10C15.5 16.5 4.5 16.5 1 10Z" fill="#e6e6e6"/><circle cx="10" cy="9.6" r="4.1" fill="#2b2b2b"/><circle cx="10" cy="9.6" r="2.2" fill="#e6e6e6"/></svg>
<svg class="a" style="left:1886.5px;top:124px" width="17" height="17" viewBox="0 0 20 20"><path d="M1 6H5L6.5 3H13.5L15 6H19V17.5H1Z" fill="#e6e6e6"/><circle cx="10" cy="11.3" r="4.6" fill="#2b2b2b"/><circle cx="10" cy="11.3" r="3.1" fill="#e6e6e6"/><circle cx="10" cy="11.3" r="1.7" fill="#2b2b2b"/></svg>
<svg class="a" style="left:1659.5px;top:150px" width="16" height="16" viewBox="0 0 20 20"><path d="M6 4.5L15 10L6 15.500Z" fill="#9a9a9a"/></svg>
<svg class="a" style="left:1684px;top:150px;opacity:0.45" width="17.5" height="17.5" viewBox="0 0 20 20"><rect x="2" y="2.5" width="16" height="4.5" fill="#d8d8d8"/><path d="M3 8.2H17V18H3Z" fill="#d8d8d8"/><rect x="7.5" y="10.3" width="5" height="2.2" rx="1" fill="#2e2e2e"/></svg>
<div class="a t" style="left:1710.5px;top:150.5px;line-height:16px;opacity:0.5">podklady</div>
<svg class="a" style="left:1837.5px;top:150px" width="16" height="16" viewBox="0 0 20 20"><rect x="2" y="2.5" width="16" height="16" rx="2.5" fill="#e6e6e6"/><path d="M5.2 10.5L8.6 14L15 6.5" fill="none" stroke="#222" stroke-width="2.4" stroke-linecap="round" stroke-linejoin="round"/></svg>
<svg class="a" style="left:1797px;top:150px;opacity:0.55" width="17.5" height="17.5" viewBox="0 0 20 20"><path d="M2.6 3.2H17.4L10 17Z" fill="none" stroke="#e0853d" stroke-width="3.7" stroke-linejoin="round"/></svg>
<div class="a" style="left:1808px;top:157px;width:13px;height:13px;border-radius:7px;background:#0c0c0c"></div>
<div class="a t" style="left:1811.5px;top:157px;line-height:13px;font-size:10px;letter-spacing:0;color:#fff">2</div>
<svg class="a" style="left:1861.5px;top:150px" width="17" height="17" viewBox="0 0 20 20"><path d="M2 8.5C5 14.5 15 14.5 18 8.5" fill="none" stroke="#8a8a8a" stroke-width="1.3" stroke-linecap="round" stroke-linejoin="round" /></svg>
<svg class="a" style="left:1886.5px;top:149px" width="17" height="17" viewBox="0 0 20 20"><path d="M1 6H5L6.5 3H13.5L15 6H19V17.5H1Z" fill="#e6e6e6"/><circle cx="10" cy="11.3" r="4.6" fill="#2b2b2b"/><circle cx="10" cy="11.3" r="3.1" fill="#e6e6e6"/><circle cx="10" cy="11.3" r="1.7" fill="#2b2b2b"/></svg>
<svg class="a" style="left:1684px;top:175px" width="17.5" height="17.5" viewBox="0 0 20 20"><rect x="2" y="2.5" width="16" height="4.5" fill="#d8d8d8"/><path d="M3 8.2H17V18H3Z" fill="#d8d8d8"/><rect x="7.5" y="10.3" width="5" height="2.2" rx="1" fill="#2e2e2e"/></svg>
<div class="a t" style="left:1710.5px;top:175.5px;line-height:16px;opacity:1">hardbase</div>
<svg class="a" style="left:1837.5px;top:175px" width="16" height="16" viewBox="0 0 20 20"><rect x="2" y="2.5" width="16" height="16" rx="2.5" fill="#e6e6e6"/><path d="M5.2 10.5L8.6 14L15 6.5" fill="none" stroke="#222" stroke-width="2.4" stroke-linecap="round" stroke-linejoin="round"/></svg>
<svg class="a" style="left:1861.5px;top:174.5px" width="17" height="17" viewBox="0 0 20 20"><path d="M1 10C4.5 3.5 15.5 3.5 19 10C15.5 16.5 4.5 16.5 1 10Z" fill="#e6e6e6"/><circle cx="10" cy="9.6" r="4.1" fill="#2b2b2b"/><circle cx="10" cy="9.6" r="2.2" fill="#e6e6e6"/></svg>
<svg class="a" style="left:1886.5px;top:174px" width="17" height="17" viewBox="0 0 20 20"><path d="M1 6H5L6.5 3H13.5L15 6H19V17.5H1Z" fill="#e6e6e6"/><circle cx="10" cy="11.3" r="4.6" fill="#2b2b2b"/><circle cx="10" cy="11.3" r="3.1" fill="#e6e6e6"/><circle cx="10" cy="11.3" r="1.7" fill="#2b2b2b"/></svg>
<svg class="a" style="left:1659.5px;top:200px" width="16" height="16" viewBox="0 0 20 20"><path d="M6 4.5L15 10L6 15.500Z" fill="#c4c4c4"/></svg>
<svg class="a" style="left:1684px;top:200px" width="17.5" height="17.5" viewBox="0 0 20 20"><path d="M2.6 3.2H17.4L10 17Z" fill="none" stroke="#e0853d" stroke-width="3.7" stroke-linejoin="round"/></svg>
<div class="a t" style="left:1710.5px;top:200.5px;line-height:16px;color:#e6e6e6;opacity:1">Cube</div>
<svg class="a" style="left:1771.5px;top:199.5px" width="18" height="18" viewBox="0 0 20 20"><path d="M12.5 2.2C10 2.6 8.6 5 9.6 7.6L3 14.5C1.8 16.2 3.8 18.2 5.5 17L12.2 10.2C14.8 11.3 17.6 9.8 17.8 7L15 9.2L12.3 8.2L11.8 5.2Z" fill="none" stroke="#6c9ce6" stroke-width="1.5" stroke-linejoin="round"/></svg>
<svg class="a" style="left:1796.5px;top:199.5px" width="18" height="18" viewBox="0 0 20 20"><path d="M4 4H16L10 16.5Z" fill="none" stroke="#5fd36a" stroke-width="1.5" stroke-linecap="round" stroke-linejoin="round" /><rect x="1.8" y="1.8" width="4.2" height="4.2" fill="#2b2b2b" stroke="#5fd36a" stroke-width="1.3"/><rect x="14" y="1.8" width="4.2" height="4.2" fill="#2b2b2b" stroke="#5fd36a" stroke-width="1.3"/><rect x="7.9" y="14" width="4.2" height="4.2" fill="#2b2b2b" stroke="#5fd36a" stroke-width="1.3"/></svg>
<svg class="a" style="left:1861.5px;top:199.5px" width="17" height="17" viewBox="0 0 20 20"><path d="M1 10C4.5 3.5 15.5 3.5 19 10C15.5 16.5 4.5 16.5 1 10Z" fill="#e6e6e6"/><circle cx="10" cy="9.6" r="4.1" fill="#2b2b2b"/><circle cx="10" cy="9.6" r="2.2" fill="#e6e6e6"/></svg>
<svg class="a" style="left:1886.5px;top:199px" width="17" height="17" viewBox="0 0 20 20"><path d="M1 6H5L6.5 3H13.5L15 6H19V17.5H1Z" fill="#e6e6e6"/><circle cx="10" cy="11.3" r="4.6" fill="#2b2b2b"/><circle cx="10" cy="11.3" r="3.1" fill="#e6e6e6"/><circle cx="10" cy="11.3" r="1.7" fill="#2b2b2b"/></svg>
<svg class="a" style="left:1659.5px;top:225px" width="16" height="16" viewBox="0 0 20 20"><path d="M6 4.5L15 10L6 15.500Z" fill="#c4c4c4"/></svg>
<svg class="a" style="left:1684px;top:225px" width="17.5" height="17.5" viewBox="0 0 20 20"><path d="M2.6 3.2H17.4L10 17Z" fill="none" stroke="#e0853d" stroke-width="3.7" stroke-linejoin="round"/></svg>
<div class="a t" style="left:1710.5px;top:225.5px;line-height:16px;color:#e6e6e6;opacity:1">Cube.001</div>
<svg class="a" style="left:1799.5px;top:224.5px" width="18" height="18" viewBox="0 0 20 20"><path d="M12.5 2.2C10 2.6 8.6 5 9.6 7.6L3 14.5C1.8 16.2 3.8 18.2 5.5 17L12.2 10.2C14.8 11.3 17.6 9.8 17.8 7L15 9.2L12.3 8.2L11.8 5.2Z" fill="none" stroke="#6c9ce6" stroke-width="1.5" stroke-linejoin="round"/></svg>
<svg class="a" style="left:1821px;top:223.5px" width="18" height="18" viewBox="0 0 20 20"><rect x="7" y="2" width="4.4" height="4.4" fill="none" stroke="#5fd36a" stroke-width="1.3" stroke-linecap="round" stroke-linejoin="round" /><path d="M11.4 4.2H14M9.2 6.4C9 10 12.5 11 13 17.5" fill="none" stroke="#5fd36a" stroke-width="1.4" stroke-linecap="round" stroke-linejoin="round" /></svg>
<svg class="a" style="left:1861.5px;top:224.5px" width="17" height="17" viewBox="0 0 20 20"><path d="M1 10C4.5 3.5 15.5 3.5 19 10C15.5 16.5 4.5 16.5 1 10Z" fill="#e6e6e6"/><circle cx="10" cy="9.6" r="4.1" fill="#2b2b2b"/><circle cx="10" cy="9.6" r="2.2" fill="#e6e6e6"/></svg>
<svg class="a" style="left:1886.5px;top:224px" width="17" height="17" viewBox="0 0 20 20"><path d="M1 6H5L6.5 3H13.5L15 6H19V17.5H1Z" fill="#e6e6e6"/><circle cx="10" cy="11.3" r="4.6" fill="#2b2b2b"/><circle cx="10" cy="11.3" r="3.1" fill="#e6e6e6"/><circle cx="10" cy="11.3" r="1.7" fill="#2b2b2b"/></svg>
<svg class="a" style="left:1659.5px;top:250px" width="16" height="16" viewBox="0 0 20 20"><path d="M6 4.5L15 10L6 15.500Z" fill="#777"/></svg>
<svg class="a" style="left:1684px;top:250px;opacity:0.45" width="17.5" height="17.5" viewBox="0 0 20 20"><path d="M2.6 3.2H17.4L10 17Z" fill="none" stroke="#e0853d" stroke-width="3.7" stroke-linejoin="round"/></svg>
<div class="a t" style="left:1710.5px;top:250.5px;line-height:16px;color:#e6e6e6;opacity:0.45">Cube.002</div>
<svg class="a" style="left:1799.5px;top:249.5px;opacity:0.45" width="18" height="18" viewBox="0 0 20 20"><path d="M12.5 2.2C10 2.6 8.6 5 9.6 7.6L3 14.5C1.8 16.2 3.8 18.2 5.5 17L12.2 10.2C14.8 11.3 17.6 9.8 17.8 7L15 9.2L12.3 8.2L11.8 5.2Z" fill="none" stroke="#6c9ce6" stroke-width="1.5" stroke-linejoin="round"/></svg>
<svg class="a" style="left:1821px;top:248.5px;opacity:0.45" width="18" height="18" viewBox="0 0 20 20"><rect x="7" y="2" width="4.4" height="4.4" fill="none" stroke="#5fd36a" stroke-width="1.3" stroke-linecap="round" stroke-linejoin="round" /><path d="M11.4 4.2H14M9.2 6.4C9 10 12.5 11 13 17.5" fill="none" stroke="#5fd36a" stroke-width="1.4" stroke-linecap="round" stroke-linejoin="round" /></svg>
<svg class="a" style="left:1861.5px;top:250px" width="17" height="17" viewBox="0 0 20 20"><path d="M2 8.5C5 14.5 15 14.5 18 8.5" fill="none" stroke="#8a8a8a" stroke-width="1.3" stroke-linecap="round" stroke-linejoin="round" /></svg>
<svg class="a" style="left:1886.5px;top:249px" width="17" height="17" viewBox="0 0 20 20"><path d="M1 6H5L6.5 3H13.5L15 6H19V17.5H1Z" fill="#e6e6e6"/><circle cx="10" cy="11.3" r="4.6" fill="#2b2b2b"/><circle cx="10" cy="11.3" r="3.1" fill="#e6e6e6"/><circle cx="10" cy="11.3" r="1.7" fill="#2b2b2b"/></svg>
<svg class="a" style="left:1659.5px;top:275px" width="16" height="16" viewBox="0 0 20 20"><path d="M6 4.5L15 10L6 15.500Z" fill="#c4c4c4"/></svg>
<svg class="a" style="left:1684px;top:275px" width="17.5" height="17.5" viewBox="0 0 20 20"><path d="M2.6 3.2H17.4L10 17Z" fill="none" stroke="#e0853d" stroke-width="3.7" stroke-linejoin="round"/></svg>
<div class="a t" style="left:1710.5px;top:275.5px;line-height:16px;color:#e6e6e6;opacity:1">Cube.003</div>
<svg class="a" style="left:1799.5px;top:274.5px" width="18" height="18" viewBox="0 0 20 20"><path d="M12.5 2.2C10 2.6 8.6 5 9.6 7.6L3 14.5C1.8 16.2 3.8 18.2 5.5 17L12.2 10.2C14.8 11.3 17.6 9.8 17.8 7L15 9.2L12.3 8.2L11.8 5.2Z" fill="none" stroke="#6c9ce6" stroke-width="1.5" stroke-linejoin="round"/></svg>
<svg class="a" style="left:1821px;top:273.5px" width="18" height="18" viewBox="0 0 20 20"><rect x="7" y="2" width="4.4" height="4.4" fill="none" stroke="#5fd36a" stroke-width="1.3" stroke-linecap="round" stroke-linejoin="round" /><path d="M11.4 4.2H14M9.2 6.4C9 10 12.5 11 13 17.5" fill="none" stroke="#5fd36a" stroke-width="1.4" stroke-linecap="round" stroke-linejoin="round" /></svg>
<svg class="a" style="left:1861.5px;top:274.5px" width="17" height="17" viewBox="0 0 20 20"><path d="M1 10C4.5 3.5 15.5 3.5 19 10C15.5 16.5 4.5 16.5 1 10Z" fill="#e6e6e6"/><circle cx="10" cy="9.6" r="4.1" fill="#2b2b2b"/><circle cx="10" cy="9.6" r="2.2" fill="#e6e6e6"/></svg>
<svg class="a" style="left:1886.5px;top:274px" width="17" height="17" viewBox="0 0 20 20"><path d="M1 6H5L6.5 3H13.5L15 6H19V17.5H1Z" fill="#e6e6e6"/><circle cx="10" cy="11.3" r="4.6" fill="#2b2b2b"/><circle cx="10" cy="11.3" r="3.1" fill="#e6e6e6"/><circle cx="10" cy="11.3" r="1.7" fill="#2b2b2b"/></svg>
<svg class="a" style="left:1659.5px;top:300px" width="16" height="16" viewBox="0 0 20 20"><path d="M6 4.5L15 10L6 15.500Z" fill="#c4c4c4"/></svg>
<div class="a" style="left:1680.5px;top:297.5px;width:24.5px;height:22.5px;background:#5f6f8e;border:1px solid #8a96ad;border-radius:5px"></div>
<svg class="a" style="left:1684px;top:300px" width="17.5" height="17.5" viewBox="0 0 20 20"><path d="M2.6 3.2H17.4L10 17Z" fill="none" stroke="#e8985a" stroke-width="3.7" stroke-linejoin="round"/></svg>
<div class="a t" style="left:1710.5px;top:300.5px;line-height:16px;color:#ffaf29;opacity:1">Cube.004</div>
<svg class="a" style="left:1799.5px;top:299.5px" width="18" height="18" viewBox="0 0 20 20"><path d="M12.5 2.2C10 2.6 8.6 5 9.6 7.6L3 14.5C1.8 16.2 3.8 18.2 5.5 17L12.2 10.2C14.8 11.3 17.6 9.8 17.8 7L15 9.2L12.3 8.2L11.8 5.2Z" fill="none" stroke="#6c9ce6" stroke-width="1.5" stroke-linejoin="round"/></svg>
<svg class="a" style="left:1821px;top:298.5px" width="18" height="18" viewBox="0 0 20 20"><rect x="7" y="2" width="4.4" height="4.4" fill="none" stroke="#5fd36a" stroke-width="1.3" stroke-linecap="round" stroke-linejoin="round" /><path d="M11.4 4.2H14M9.2 6.4C9 10 12.5 11 13 17.5" fill="none" stroke="#5fd36a" stroke-width="1.4" stroke-linecap="round" stroke-linejoin="round" /></svg>
<svg class="a" style="left:1861.5px;top:299.5px" width="17" height="17" viewBox="0 0 20 20"><path d="M1 10C4.5 3.5 15.5 3.5 19 10C15.5 16.5 4.5 16.5 1 10Z" fill="#e6e6e6"/><circle cx="10" cy="9.6" r="4.1" fill="#2b2b2b"/><circle cx="10" cy="9.6" r="2.2" fill="#e6e6e6"/></svg>
<svg class="a" style="left:1886.5px;top:299px" width="17" height="17" viewBox="0 0 20 20"><path d="M1 6H5L6.5 3H13.5L15 6H19V17.5H1Z" fill="#e6e6e6"/><circle cx="10" cy="11.3" r="4.6" fill="#2b2b2b"/><circle cx="10" cy="11.3" r="3.1" fill="#e6e6e6"/><circle cx="10" cy="11.3" r="1.7" fill="#2b2b2b"/></svg>
<svg class="a" style="left:1659.5px;top:325px" width="16" height="16" viewBox="0 0 20 20"><path d="M6 4.5L15 10L6 15.500Z" fill="#c4c4c4"/></svg>
<svg class="a" style="left:1684px;top:325px" width="17.5" height="17.5" viewBox="0 0 20 20"><path d="M2.6 3.2H17.4L10 17Z" fill="none" stroke="#e0853d" stroke-width="3.7" stroke-linejoin="round"/></svg>
<div class="a t" style="left:1710.5px;top:325.5px;line-height:16px;color:#e6e6e6;opacity:1">Cube.005</div>
<svg class="a" style="left:1799.5px;top:324.5px" width="18" height="18" viewBox="0 0 20 20"><path d="M12.5 2.2C10 2.6 8.6 5 9.6 7.6L3 14.5C1.8 16.2 3.8 18.2 5.5 17L12.2 10.2C14.8 11.3 17.6 9.8 17.8 7L15 9.2L12.3 8.2L11.8 5.2Z" fill="none" stroke="#6c9ce6" stroke-width="1.5" stroke-linejoin="round"/></svg>
<svg class="a" style="left:1821px;top:323.5px" width="18" height="18" viewBox="0 0 20 20"><rect x="7" y="2" width="4.4" height="4.4" fill="none" stroke="#5fd36a" stroke-width="1.3" stroke-linecap="round" stroke-linejoin="round" /><path d="M11.4 4.2H14M9.2 6.4C9 10 12.5 11 13 17.5" fill="none" stroke="#5fd36a" stroke-width="1.4" stroke-linecap="round" stroke-linejoin="round" /></svg>
<svg class="a" style="left:1861.5px;top:324.5px" width="17" height="17" viewBox="0 0 20 20"><path d="M1 10C4.5 3.5 15.5 3.5 19 10C15.5 16.5 4.5 16.5 1 10Z" fill="#e6e6e6"/><circle cx="10" cy="9.6" r="4.1" fill="#2b2b2b"/><circle cx="10" cy="9.6" r="2.2" fill="#e6e6e6"/></svg>
<svg class="a" style="left:1886.5px;top:324px" width="17" height="17" viewBox="0 0 20 20"><path d="M1 6H5L6.5 3H13.5L15 6H19V17.5H1Z" fill="#e6e6e6"/><circle cx="10" cy="11.3" r="4.6" fill="#2b2b2b"/><circle cx="10" cy="11.3" r="3.1" fill="#e6e6e6"/><circle cx="10" cy="11.3" r="1.7" fill="#2b2b2b"/></svg>
<div class="a" style="left:1630px;top:346px;width:290px;height:16px;overflow:hidden"><div class="a" style="left:-1630px;top:-346px;width:1920px;height:991px">
<svg class="a" style="left:1659.5px;top:350px" width="16" height="16" viewBox="0 0 20 20"><path d="M6 4.5L15 10L6 15.500Z" fill="#c4c4c4"/></svg>
<svg class="a" style="left:1684px;top:350px" width="17.5" height="17.5" viewBox="0 0 20 20"><path d="M2.6 3.2H17.4L10 17Z" fill="none" stroke="#e0853d" stroke-width="3.7" stroke-linejoin="round"/></svg>
<div class="a t" style="left:1710.5px;top:350.5px;line-height:16px;color:#e6e6e6;opacity:1">Cube.006</div>
<svg class="a" style="left:1799.5px;top:349.5px" width="18" height="18" viewBox="0 0 20 20"><path d="M12.5 2.2C10 2.6 8.6 5 9.6 7.6L3 14.5C1.8 16.2 3.8 18.2 5.5 17L12.2 10.2C14.8 11.3 17.6 9.8 17.8 7L15 9.2L12.3 8.2L11.8 5.2Z" fill="none" stroke="#6c9ce6" stroke-width="1.5" stroke-linejoin="round"/></svg>
<svg class="a" style="left:1821px;top:348.5px" width="18" height="18" viewBox="0 0 20 20"><rect x="7" y="2" width="4.4" height="4.4" fill="none" stroke="#5fd36a" stroke-width="1.3" stroke-linecap="round" stroke-linejoin="round" /><path d="M11.4 4.2H14M9.2 6.4C9 10 12.5 11 13 17.5" fill="none" stroke="#5fd36a" stroke-width="1.4" stroke-linecap="round" stroke-linejoin="round" /></svg>
<svg class="a" style="left:1861.5px;top:349.5px" width="17" height="17" viewBox="0 0 20 20"><path d="M1 10C4.5 3.5 15.5 3.5 19 10C15.5 16.5 4.5 16.5 1 10Z" fill="#e6e6e6"/><circle cx="10" cy="9.6" r="4.1" fill="#2b2b2b"/><circle cx="10" cy="9.6" r="2.2" fill="#e6e6e6"/></svg>
<svg class="a" style="left:1886.5px;top:349px" width="17" height="17" viewBox="0 0 20 20"><path d="M1 6H5L6.5 3H13.5L15 6H19V17.5H1Z" fill="#e6e6e6"/><circle cx="10" cy="11.3" r="4.6" fill="#2b2b2b"/><circle cx="10" cy="11.3" r="3.1" fill="#e6e6e6"/><circle cx="10" cy="11.3" r="1.7" fill="#2b2b2b"/></svg>
</div></div>
<div class="a" style="left:1912px;top:107px;width:4.5px;height:199px;background:#505050;border-radius:2px;opacity:.7"></div>
<div class="a" style="left:1640px;top:355px;width:265px;height:4px;background:#4a4a4a;border-radius:2px;opacity:.8"></div>
<div class="a" style="left:1630px;top:63px;width:290px;height:31.5px;background:#424242;border-radius:5px 0 0 0"></div>
<div class="a" style="left:1641px;top:67px;width:38px;height:23px;background:#2b2b2b;border-radius:4px"></div>
<svg class="a" style="left:1644px;top:69px" width="20" height="20" viewBox="0 0 20 20"><rect x="2" y="2" width="6" height="3.5" fill="#e6e6e6"/><rect x="9" y="8" width="8" height="3.5" fill="#e6e6e6"/><rect x="9" y="14" width="8" height="3.5" fill="#e6e6e6"/><path d="M4.5 6.5V15.8H8M4.5 9.8H8" fill="none" stroke="#e6e6e6" stroke-width="1.2" stroke-linecap="round" stroke-linejoin="round" /></svg>
<svg class="a" style="left:1661px;top:70px" width="18" height="18" viewBox="0 0 20 20"><path d="M7.4 8.3L11.4 12.2L15.4 8.3" fill="none" stroke="#e6e6e6" stroke-width="1.4" stroke-linecap="round" stroke-linejoin="round" /></svg>
<div class="a" style="left:1687px;top:67px;width:38px;height:23px;background:#2b2b2b;border-radius:4px"></div>
<svg class="a" style="left:1690px;top:69px" width="20" height="20" viewBox="0 0 20 20"><rect x="6.5" y="2.5" width="11" height="10" fill="#e6e6e6"/><path d="M8 11L11 6.5L13 9L14.3 8L16.5 11Z" fill="#2b2b2b"/><circle cx="15" cy="5" r="1" fill="#2b2b2b"/><path d="M4.5 5V14.5H15M2.5 7.5V17H13" fill="none" stroke="#e6e6e6" stroke-width="1.3" stroke-linecap="round" stroke-linejoin="round" /></svg>
<svg class="a" style="left:1707px;top:70px" width="18" height="18" viewBox="0 0 20 20"><path d="M7.4 8.3L11.4 12.2L15.4 8.3" fill="none" stroke="#e6e6e6" stroke-width="1.4" stroke-linecap="round" stroke-linejoin="round" /></svg>
<div class="a" style="left:1746px;top:67px;width:142px;height:23px;background:#1d1d1d;border-radius:4px"></div>
<svg class="a" style="left:1750px;top:69px" width="19" height="19" viewBox="0 0 20 20"><circle cx="12" cy="8" r="5.2" fill="none" stroke="#e6e6e6" stroke-width="1.5" stroke-linecap="round" stroke-linejoin="round" /><path d="M8.3 11.8L2.5 17.5" fill="none" stroke="#e6e6e6" stroke-width="1.6" stroke-linecap="round" stroke-linejoin="round" /></svg>
<div class="a" style="left:1909px;top:67px;width:20px;height:23px;background:#2b2b2b;border-radius:4px"></div>
<svg class="a" style="left:1910.5px;top:69px" width="20" height="20" viewBox="0 0 20 20"><path d="M2.5 3.5H17.5L11.5 10.5V17L8.5 15V10.5Z" fill="none" stroke="#e6e6e6" stroke-width="1.4" stroke-linecap="round" stroke-linejoin="round" /></svg>
<div class="a" style="left:1630px;top:364px;width:290px;height:627px;background:#454545;border-radius:5px 0 0 0;overflow:hidden"></div>
<div class="a" style="left:1630px;top:394.5px;width:34.5px;height:597px;background:#2b2b2b"></div>
<div class="a" style="left:1630px;top:364px;width:290px;height:31px;background:#424242;border-radius:5px 0 0 0"></div>
<div class="a" style="left:1641px;top:368px;width:38px;height:23px;background:#2b2b2b;border-radius:4px"></div>
<svg class="a" style="left:1644px;top:370px" width="20" height="20" viewBox="0 0 20 20"><rect x="2" y="2.5" width="15" height="6.4" rx="3.2" fill="#e6e6e6"/><rect x="2" y="11" width="15" height="6.4" rx="3.2" fill="#e6e6e6"/><rect x="9" y="4" width="6.6" height="3.4" rx="1.7" fill="#2b2b2b"/><rect x="10.6" y="12.5" width="5" height="3.4" rx="1.7" fill="#2b2b2b"/></svg>
<svg class="a" style="left:1661px;top:371px" width="18" height="18" viewBox="0 0 20 20"><path d="M7.4 8.3L11.4 12.2L15.4 8.3" fill="none" stroke="#e6e6e6" stroke-width="1.4" stroke-linecap="round" stroke-linejoin="round" /></svg>
<div class="a" style="left:1711px;top:368px;width:142px;height:23px;background:#1d1d1d;border-radius:4px"></div>
<svg class="a" style="left:1715px;top:370px" width="19" height="19" viewBox="0 0 20 20"><circle cx="12" cy="8" r="5.2" fill="none" stroke="#e6e6e6" stroke-width="1.5" stroke-linecap="round" stroke-linejoin="round" /><path d="M8.3 11.8L2.5 17.5" fill="none" stroke="#e6e6e6" stroke-width="1.6" stroke-linecap="round" stroke-linejoin="round" /></svg>
<div class="a" style="left:1886px;top:368px;width:23px;height:23px;background:#2b2b2b;border-radius:4px"></div>
<svg class="a" style="left:1888.5px;top:371px" width="18" height="18" viewBox="0 0 20 20"><path d="M7.4 8.3L11.4 12.2L15.4 8.3" fill="none" stroke="#e6e6e6" stroke-width="1.4" stroke-linecap="round" stroke-linejoin="round" /></svg>
<div class="a" style="left:1631.5px;top:405.5px;width:33px;height:33px;background:#363636;border-radius:5px 0 0 5px"></div>
<svg class="a" style="left:1639px;top:412.0px" width="20" height="20" viewBox="0 0 20 20"><path d="M4.5 2.5V10.5" fill="none" stroke="#e0e0e0" stroke-width="1.5" stroke-linecap="round" stroke-linejoin="round" /><rect x="2.2" y="11" width="4.6" height="7" rx="2" fill="#e0e0e0"/><path d="M11 2.2V6.5L12.5 8V17C12.5 18.6 15.5 18.6 15.5 17V8L17 6.5V2.2C19 3.5 19.4 7 17.2 8.6V17M11 2.2C9 3.5 8.6 7 10.8 8.6" fill="none" stroke="#e0e0e0" stroke-width="1.5" stroke-linejoin="round"/></svg>
<div class="a" style="left:1631.5px;top:449.5px;width:33px;height:33px;background:#363636;border-radius:5px 0 0 5px"></div>
<svg class="a" style="left:1639px;top:456.0px" width="20" height="20" viewBox="0 0 20 20"><path d="M1.5 6.5H4L5 4.5H9.5V6.5H18.5V18H1.5Z" fill="#e0e0e0"/><rect x="3.5" y="8.5" width="9.5" height="7.5" fill="#353535"/><path d="M4.5 10.3H12M4.5 12.3H12M4.5 14.3H12" stroke="#e0e0e0" stroke-width="1"/><circle cx="15.8" cy="10" r="1" fill="#353535"/><circle cx="15.8" cy="14" r="1" fill="#353535"/><path d="M13 3.5H17" stroke="#e0e0e0" stroke-width="1.5"/></svg>
<div class="a" style="left:1631.5px;top:484.5px;width:33px;height:33px;background:#363636;border-radius:5px 0 0 5px"></div>
<svg class="a" style="left:1639px;top:491.0px" width="20" height="20" viewBox="0 0 20 20"><path d="M1.5 3H18.5V9H16V6.5H4V9H1.5Z" fill="#e0e0e0"/><rect x="4.5" y="8" width="11" height="10" fill="#e0e0e0"/><path d="M6 16L9 11.5L11 14L12 13L14 16Z" fill="#353535"/><circle cx="13" cy="10.5" r="1" fill="#353535"/></svg>
<div class="a" style="left:1631.5px;top:519.5px;width:33px;height:33px;background:#363636;border-radius:5px 0 0 5px"></div>
<svg class="a" style="left:1639px;top:526.0px" width="20" height="20" viewBox="0 0 20 20"><rect x="6.5" y="2.5" width="11" height="10" fill="#e0e0e0"/><path d="M8 11L11 6.5L13 9L14.3 8L16.5 11Z" fill="#2b2b2b"/><circle cx="15" cy="5" r="1" fill="#2b2b2b"/><path d="M4.5 5V14.5H15M2.5 7.5V17H13" fill="none" stroke="#e0e0e0" stroke-width="1.3" stroke-linecap="round" stroke-linejoin="round" /></svg>
<div class="a" style="left:1631.5px;top:554.5px;width:33px;height:33px;background:#363636;border-radius:5px 0 0 5px"></div>
<svg class="a" style="left:1639px;top:561.0px" width="20" height="20" viewBox="0 0 20 20"><path d="M6 2.5C8 6 10 9 10 11.5C10 14 8.3 15.5 6 15.5C3.7 15.5 2 14 2 11.5C2 9 4 6 6 2.5Z" fill="#e0e0e0"/><circle cx="15" cy="5" r="2.6" fill="#e0e0e0"/><circle cx="13" cy="14" r="4" fill="#2b2b2b" stroke="#e0e0e0" stroke-width="1.4"/><path d="M11.3 13.5A1.9 1.9 0 0 1 13 12" fill="none" stroke="#e0e0e0" stroke-width="0.9" stroke-linecap="round" stroke-linejoin="round" /></svg>
<div class="a" style="left:1631.5px;top:589.5px;width:33px;height:33px;background:#363636;border-radius:5px 0 0 5px"></div>
<svg class="a" style="left:1639px;top:596.0px" width="20" height="20" viewBox="0 0 20 20"><circle cx="10" cy="10" r="7.4" fill="none" stroke="#e25858" stroke-width="1.5" stroke-linecap="round" stroke-linejoin="round" /><path d="M4 6.5C7 5.5 8.5 8 10.5 7.5C9.5 10 12.5 10.5 11 13C10 14.5 8 13.5 7.5 11.5C6 11.5 4 10 4 6.5ZM12.5 4C14 4.5 16 6.5 16 8.5C14.5 8 13 6.5 12.5 4ZM10 16C11.5 14.5 14 14 15.5 14.5C14 16.5 11.5 17.2 10 16Z" fill="#e25858"/><path d="M3 17.5L5 15.5M17.5 2.5L16 4" fill="none" stroke="#e25858" stroke-width="1.5" stroke-linecap="round" stroke-linejoin="round" /></svg>
<div class="a" style="left:1631.5px;top:634px;width:33px;height:33px;background:#363636;border-radius:5px 0 0 5px"></div>
<svg class="a" style="left:1639px;top:640.5px" width="20" height="20" viewBox="0 0 20 20"><rect x="5.5" y="5.5" width="9" height="9" fill="#e0914a"/><path d="M2 6V2.5H6M14 2.5H18V6M18 14V17.5H14M6 17.5H2V14" fill="none" stroke="#e0914a" stroke-width="1.2" stroke-linecap="round" stroke-linejoin="round" /></svg>
<div class="a" style="left:1631.5px;top:669.5px;width:33px;height:33px;background:#454545;border-radius:5px 0 0 5px"></div>
<svg class="a" style="left:1639px;top:676.0px" width="20" height="20" viewBox="0 0 20 20"><path d="M12.8 1.8C9.8 2.2 8.2 5 9.3 7.6L2.6 14.3C1.2 16.2 3.6 18.8 5.7 17.4L12.4 10.6C15 11.6 18.2 9.8 18.2 6.6L15 9L12.4 8L11.6 5Z" fill="#6ea6f2"/></svg>
<div class="a" style="left:1631.5px;top:704.5px;width:33px;height:33px;background:#363636;border-radius:5px 0 0 5px"></div>
<svg class="a" style="left:1639px;top:711.0px" width="20" height="20" viewBox="0 0 20 20"><circle cx="4.8" cy="4.8" r="3.2" fill="#6c9ce0"/><circle cx="16" cy="4.8" r="1.7" fill="#6c9ce0"/><circle cx="4.8" cy="16.5" r="1.7" fill="#6c9ce0"/><circle cx="15.5" cy="15.5" r="2.4" fill="#6c9ce0"/><path d="M4.8 4.8H16M4.8 4.8V16.5M4.8 4.8L15.5 15.5" fill="none" stroke="#6c9ce0" stroke-width="1.3" stroke-linecap="round" stroke-linejoin="round" /></svg>
<div class="a" style="left:1631.5px;top:739.5px;width:33px;height:33px;background:#363636;border-radius:5px 0 0 5px"></div>
<svg class="a" style="left:1639px;top:746.0px" width="20" height="20" viewBox="0 0 20 20"><path d="M14.5 15A7 7 0 1 1 14.5 5" fill="none" stroke="#6c9ce0" stroke-width="1.5" stroke-linecap="round" stroke-linejoin="round" /><circle cx="9.5" cy="10" r="3" fill="#6c9ce0"/><circle cx="16" cy="4.5" r="2" fill="#6c9ce0"/></svg>
<div class="a" style="left:1631.5px;top:774.5px;width:33px;height:33px;background:#363636;border-radius:5px 0 0 5px"></div>
<svg class="a" style="left:1639px;top:781.0px" width="20" height="20" viewBox="0 0 20 20"><path d="M12 2.5C15.5 1.5 18.5 4.5 17.5 8L15 14C13.5 18 8 19 4.5 16.5C1 14 1.5 9 5 7Z" fill="none" stroke="#6c9ce0" stroke-width="1.5" stroke-linecap="round" stroke-linejoin="round" /><circle cx="8" cy="12" r="3.6" fill="none" stroke="#6c9ce0" stroke-width="1.5" stroke-linecap="round" stroke-linejoin="round" /><circle cx="8" cy="12" r="1.3" fill="#6c9ce0"/><circle cx="14.5" cy="5.5" r="1.1" fill="#6c9ce0"/></svg>
<div class="a" style="left:1631.5px;top:809.5px;width:33px;height:33px;background:#363636;border-radius:5px 0 0 5px"></div>
<svg class="a" style="left:1639px;top:816.0px" width="20" height="20" viewBox="0 0 20 20"><path d="M4 4H16L10 16.5Z" fill="none" stroke="#5fd36a" stroke-width="1.5" stroke-linecap="round" stroke-linejoin="round" /><rect x="1.8" y="1.8" width="4.2" height="4.2" fill="#2b2b2b" stroke="#5fd36a" stroke-width="1.3"/><rect x="14" y="1.8" width="4.2" height="4.2" fill="#2b2b2b" stroke="#5fd36a" stroke-width="1.3"/><rect x="7.9" y="14" width="4.2" height="4.2" fill="#2b2b2b" stroke="#5fd36a" stroke-width="1.3"/></svg>
<div class="a" style="left:1631.5px;top:844.5px;width:33px;height:33px;background:#363636;border-radius:5px 0 0 5px"></div>
<svg class="a" style="left:1639px;top:851.0px" width="20" height="20" viewBox="0 0 20 20"><circle cx="10" cy="10" r="7.6" fill="#e25858"/><path d="M10 10V3.6A6.4 6.4 0 0 1 16.4 10ZM10 10V16.4A6.4 6.4 0 0 1 3.6 10Z" fill="#353535"/></svg>
<div class="a" style="left:1631.5px;top:889px;width:33px;height:33px;background:#363636;border-radius:5px 0 0 5px"></div>
<svg class="a" style="left:1639px;top:895.5px" width="20" height="20" viewBox="0 0 20 20"><rect x="2" y="2" width="4" height="4" fill="#e25858"/><rect x="10" y="2" width="4" height="4" fill="#e25858"/><rect x="6" y="6" width="4" height="4" fill="#e25858"/><rect x="14" y="6" width="4" height="4" fill="#e25858"/><rect x="2" y="10" width="4" height="4" fill="#e25858"/><rect x="10" y="10" width="4" height="4" fill="#e25858"/><rect x="6" y="14" width="4" height="4" fill="#e25858"/><rect x="14" y="14" width="4" height="4" fill="#e25858"/><rect x="2" y="2" width="16" height="16" fill="none" stroke="#e25858" stroke-width="1"/></svg>
<svg class="a" style="left:1678px;top:408px" width="19" height="19" viewBox="0 0 20 20"><rect x="5.5" y="5.5" width="9" height="9" fill="#e6e6e6"/><path d="M2 6V2.5H6M14 2.5H18V6M18 14V17.5H14M6 17.5H2V14" fill="none" stroke="#e6e6e6" stroke-width="1.3" stroke-linecap="round" stroke-linejoin="round" /></svg>
<div class="a t ts" style="left:1707.5px;top:409.5px;line-height:16px;">Cube....</div>
<svg class="a" style="left:1758px;top:409px" width="17" height="17" viewBox="0 0 20 20"><path d="M7.5 5L12.5 10L7.5 15" fill="none" stroke="#e6e6e6" stroke-width="1.4" stroke-linecap="round" stroke-linejoin="round" /></svg>
<svg class="a" style="left:1782.5px;top:408.5px" width="18" height="18" viewBox="0 0 20 20"><rect x="2" y="2" width="16" height="16" fill="none" stroke="#e6e6e6" stroke-width="1.1" stroke-linecap="round" stroke-linejoin="round" /><circle cx="10" cy="10" r="5.6" fill="none" stroke="#e6e6e6" stroke-width="1.5" stroke-linecap="round" stroke-linejoin="round" /></svg>
<div class="a t ts" style="left:1811.5px;top:409.5px;line-height:16px;">Subdivi...</div>
<svg class="a" style="left:1888.5px;top:408px" width="19" height="19" viewBox="0 0 20 20"><path d="M11 2.5L17.5 9L15.5 9.5L12.5 12.5L12 16L4 8L7.5 7.5L10.5 4.5Z" fill="none" stroke="#aaa" stroke-width="1.3" stroke-linecap="round" stroke-linejoin="round" /><path d="M7.8 12.2L2.5 17.5" fill="none" stroke="#aaa" stroke-width="1.3" stroke-linecap="round" stroke-linejoin="round" /></svg>
<div class="a" style="left:1676px;top:451px;width:233px;height:23px;background:#2b2b2b;border-radius:4px"></div>
<div class="a t ts" style="left:1685.5px;top:454px;line-height:16px;">Add Modifier</div>
<svg class="a" style="left:1890px;top:455px" width="18" height="18" viewBox="0 0 20 20"><path d="M7.4 8.3L11.4 12.2L15.4 8.3" fill="none" stroke="#e6e6e6" stroke-width="1.4" stroke-linecap="round" stroke-linejoin="round" /></svg>
<div class="a" style="left:1675.5px;top:487px;width:235px;height:194px;background:#383838;border:1px solid #4f78b8;border-radius:5px"></div>
<div class="a" style="left:1676.5px;top:488px;width:233px;height:30px;background:#424242;border-radius:4px 4px 0 0"></div>
<svg class="a" style="left:1681px;top:493.5px" width="19" height="19" viewBox="0 0 20 20"><path d="M7.4 8.3L11.4 12.2L15.4 8.3" fill="none" stroke="#ccc" stroke-width="1.4" stroke-linecap="round" stroke-linejoin="round" /></svg>
<svg class="a" style="left:1703.5px;top:494.5px" width="18" height="18" viewBox="0 0 20 20"><rect x="2" y="2" width="16" height="16" fill="none" stroke="#e6e6e6" stroke-width="1.1" stroke-linecap="round" stroke-linejoin="round" /><circle cx="10" cy="10" r="5.6" fill="none" stroke="#e6e6e6" stroke-width="1.5" stroke-linecap="round" stroke-linejoin="round" /></svg>
<div class="a" style="left:1736px;top:492px;width:22px;height:23px;background:#575757;border-radius:4px 0 0 4px"></div>
<svg class="a" style="left:1737.5px;top:494px" width="19" height="19" viewBox="0 0 20 20"><path d="M4 4H16L10 16.5Z" fill="none" stroke="#e6e6e6" stroke-width="1.5" stroke-linecap="round" stroke-linejoin="round" /><rect x="1.8" y="1.8" width="4.2" height="4.2" fill="#2b2b2b" stroke="#e6e6e6" stroke-width="1.3"/><rect x="14" y="1.8" width="4.2" height="4.2" fill="#2b2b2b" stroke="#e6e6e6" stroke-width="1.3"/><rect x="7.9" y="14" width="4.2" height="4.2" fill="#2b2b2b" stroke="#e6e6e6" stroke-width="1.3"/></svg>
<div class="a" style="left:1758.5px;top:492px;width:22.2px;height:23px;background:#5680c2"></div>
<svg class="a" style="left:1760.0px;top:494px" width="19" height="19" viewBox="0 0 20 20"><path d="M4 4.5H12M4 4.5V16M4 16H16M16 16V9" fill="none" stroke="#fff" stroke-width="1.2" stroke-linecap="round" stroke-linejoin="round" /><rect x="2" y="2.2" width="4.2" height="4.2" fill="#5680c2" stroke="#fff" stroke-width="1.2"/><rect x="2" y="13.8" width="4.2" height="4.2" fill="#5680c2" stroke="#fff" stroke-width="1.2"/><rect x="13.8" y="13.8" width="4.2" height="4.2" fill="#5680c2" stroke="#fff" stroke-width="1.2"/><rect x="12.5" y="1.5" width="6" height="6" fill="#fff"/></svg>
<div class="a" style="left:1781.5px;top:492px;width:22.2px;height:23px;background:#5680c2"></div>
<svg class="a" style="left:1783.0px;top:494px" width="19" height="19" viewBox="0 0 20 20"><rect x="2" y="3" width="16" height="11" rx="1" fill="none" stroke="#fff" stroke-width="1.5" stroke-linecap="round" stroke-linejoin="round" /><rect x="4.5" y="5.5" width="11" height="6" fill="#fff"/><path d="M10 14V17M6 17.5H14" fill="none" stroke="#fff" stroke-width="1.5" stroke-linecap="round" stroke-linejoin="round" /></svg>
<div class="a" style="left:1804.5px;top:492px;width:22.2px;height:23px;background:#5680c2"></div>
<svg class="a" style="left:1806.0px;top:494px" width="19" height="19" viewBox="0 0 20 20"><path d="M1 6H5L6.5 3H13.5L15 6H19V17.5H1Z" fill="#fff"/><circle cx="10" cy="11.3" r="4.6" fill="#2b2b2b"/><circle cx="10" cy="11.3" r="3.1" fill="#fff"/><circle cx="10" cy="11.3" r="1.7" fill="#2b2b2b"/></svg>
<div class="a" style="left:1827px;top:492px;width:22px;height:23px;background:#282828;border-radius:0 4px 4px 0"></div>
<svg class="a" style="left:1829px;top:495px" width="18" height="18" viewBox="0 0 20 20"><path d="M7.4 8.3L11.4 12.2L15.4 8.3" fill="none" stroke="#e6e6e6" stroke-width="1.4" stroke-linecap="round" stroke-linejoin="round" /></svg>
<svg class="a" style="left:1852.5px;top:494.5px" width="18" height="18" viewBox="0 0 20 20"><path d="M5 5L15 15M15 5L5 15" fill="none" stroke="#e0e0e0" stroke-width="1.4" stroke-linecap="round" stroke-linejoin="round" /></svg>
<svg class="a" style="left:1885.5px;top:493.5px" width="19" height="19" viewBox="0 0 20 20"><rect x="2.5" y="6.5" width="2.4" height="2.4" fill="#b0b0b0"/><rect x="6.5" y="6.5" width="2.4" height="2.4" fill="#b0b0b0"/><rect x="10.5" y="6.5" width="2.4" height="2.4" fill="#b0b0b0"/><rect x="14.5" y="6.5" width="2.4" height="2.4" fill="#b0b0b0"/><rect x="2.5" y="11.0" width="2.4" height="2.4" fill="#b0b0b0"/><rect x="6.5" y="11.0" width="2.4" height="2.4" fill="#b0b0b0"/><rect x="10.5" y="11.0" width="2.4" height="2.4" fill="#b0b0b0"/><rect x="14.5" y="11.0" width="2.4" height="2.4" fill="#b0b0b0"/></svg>
<div class="a t ts" style="left:1686px;top:529px;width:106px;height:23px;background:#5680c2;border-radius:4px 0 0 4px;text-align:center;line-height:23px;color:#fff">Catmull-Clark</div>
<div class="a t ts" style="left:1792.5px;top:529px;width:107px;height:23px;background:#575757;border-radius:0 4px 4px 0;text-align:center;line-height:23px">Simple</div>
<div class="a t ts" style="left:1690.5px;top:563.5px;line-height:16px;">Levels Vi...</div>
<div class="a t ts" style="left:1710.5px;top:588px;line-height:16px;">Render</div>
<div class="a t ts" style="left:1768px;top:560px;width:106px;height:23.5px;background:#595959;border-radius:4px 4px 0 0;text-align:center;line-height:23px">6</div>
<div class="a t ts" style="left:1768px;top:584.5px;width:106px;height:23.5px;background:#595959;border-radius:0 0 4px 4px;text-align:center;line-height:23px">2</div>
<div class="a" style="left:1885px;top:569.0px;width:5px;height:5px;background:#e0e0e0;border-radius:3px"></div>
<div class="a" style="left:1885px;top:593.5px;width:5px;height:5px;background:#e0e0e0;border-radius:3px"></div>
<div class="a" style="left:1885px;top:625.0px;width:5px;height:5px;background:#e0e0e0;border-radius:3px"></div>
<div class="a" style="left:1768px;top:619px;width:17.5px;height:17.5px;background:#5680c2;border-radius:4px"></div>
<svg class="a" style="left:1768px;top:619px" width="18" height="18"><path d="M4 9.200L7.600 12.800L14 5.500" fill="none" stroke="#fff" stroke-width="2" stroke-linecap="round" stroke-linejoin="round"/></svg>
<div class="a t ts" style="left:1789.5px;top:619.5px;line-height:16px;">Optimal Di...</div>
<svg class="a" style="left:1700.5px;top:657px" width="17" height="17" viewBox="0 0 20 20"><path d="M7.5 5L12.5 10L7.5 15" fill="none" stroke="#ccc" stroke-width="1.4" stroke-linecap="round" stroke-linejoin="round" /></svg>
<div class="a t ts" style="left:1719px;top:658.5px;line-height:16px;">Advanced</div>
<div class="a" style="left:1px;top:925px;width:1626.5px;height:66px;background:#2b2b2b;border-radius:5px 5px 0 0;overflow:hidden"></div>
<div class="a" style="left:1px;top:925px;width:1626.5px;height:31.5px;background:#424242;border-radius:5px 5px 0 0"></div>
<div class="a" style="left:10.5px;top:930px;width:38.5px;height:23px;background:#2b2b2b;border-radius:4px"></div>
<svg class="a" style="left:14px;top:932px" width="19" height="19" viewBox="0 0 20 20"><circle cx="10" cy="10" r="8" fill="#e6e6e6"/><path d="M12.5 5L8.5 10L12.5 15" fill="none" stroke="#303030" stroke-width="2" stroke-linecap="round" stroke-linejoin="round" /></svg>
<svg class="a" style="left:31px;top:933px" width="18" height="18" viewBox="0 0 20 20"><path d="M7.4 8.3L11.4 12.2L15.4 8.3" fill="none" stroke="#e6e6e6" stroke-width="1.4" stroke-linecap="round" stroke-linejoin="round" /></svg>
<div class="a" style="left:57px;top:930px;width:87.5px;height:23px;background:#2b2b2b;border-radius:4px 0 0 4px"></div>
<div class="a t ts" style="left:66px;top:933px;line-height:16px;">Playback</div>
<svg class="a" style="left:126px;top:933px" width="18" height="18" viewBox="0 0 20 20"><path d="M7.4 8.3L11.4 12.2L15.4 8.3" fill="none" stroke="#e6e6e6" stroke-width="1.4" stroke-linecap="round" stroke-linejoin="round" /></svg>
<div class="a" style="left:145.5px;top:930px;width:74.5px;height:23px;background:#2b2b2b;border-radius:0 4px 4px 0"></div>
<div class="a t ts" style="left:154px;top:933px;line-height:16px;">Keying</div>
<svg class="a" style="left:202px;top:933px" width="18" height="18" viewBox="0 0 20 20"><path d="M7.4 8.3L11.4 12.2L15.4 8.3" fill="none" stroke="#e6e6e6" stroke-width="1.4" stroke-linecap="round" stroke-linejoin="round" /></svg>
<div class="a t ts" style="left:232px;top:933px;line-height:16px;">View</div>
<div class="a t ts" style="left:282px;top:933px;line-height:16px;">Marker</div>
<div class="a" style="left:697.5px;top:930px;width:24px;height:23px;background:#575757;border-radius:4px 0 0 4px"></div>
<svg class="a" style="left:699.5px;top:931.5px" width="20" height="20" viewBox="0 0 20 20"><circle cx="10" cy="10" r="4.2" fill="#e0e0e0"/></svg>
<div class="a" style="left:721.5px;top:930px;width:24.5px;height:23px;background:#383838;border-radius:0 4px 4px 0"></div>
<svg class="a" style="left:724.5px;top:933px" width="18" height="18" viewBox="0 0 20 20"><path d="M7.4 8.3L11.4 12.2L15.4 8.3" fill="none" stroke="#5a5a5a" stroke-width="1.4" stroke-linecap="round" stroke-linejoin="round" /></svg>
<div class="a" style="left:754px;top:930px;width:148.5px;height:23px;background:#575757;border-radius:4px"></div>
<svg class="a" style="left:756.5px;top:931.5px" width="20" height="20" viewBox="0 0 20 20"><path d="M5 4.5V15.5" fill="none" stroke="#e8e8e8" stroke-width="2" stroke-linecap="round" stroke-linejoin="round" /><path d="M15.5 4.5V15.5L7.5 10Z" fill="#e8e8e8"/></svg>
<div class="a" style="left:778.35px;top:930px;width:0.8px;height:23px;background:#3a3a3a"></div>
<svg class="a" style="left:781.25px;top:931.5px" width="20" height="20" viewBox="0 0 20 20"><path d="M6.5 4.5L12 10L6.5 15.5L1 10Z" fill="#e8e8e8"/><path d="M19 5V15L12.5 10Z" fill="#e8e8e8"/></svg>
<div class="a" style="left:803.1px;top:930px;width:0.8px;height:23px;background:#3a3a3a"></div>
<svg class="a" style="left:806.0px;top:931.5px" width="20" height="20" viewBox="0 0 20 20"><path d="M15.5 3.5V16.5L4 10Z" fill="#e8e8e8"/></svg>
<div class="a" style="left:827.85px;top:930px;width:0.8px;height:23px;background:#3a3a3a"></div>
<svg class="a" style="left:830.75px;top:931.5px" width="20" height="20" viewBox="0 0 20 20"><path d="M4.5 3.5V16.5L16 10Z" fill="#e8e8e8"/></svg>
<div class="a" style="left:852.6px;top:930px;width:0.8px;height:23px;background:#3a3a3a"></div>
<svg class="a" style="left:855.5px;top:931.5px" width="20" height="20" viewBox="0 0 20 20"><path d="M13.5 4.5L19 10L13.5 15.5L8 10Z" fill="#e8e8e8"/><path d="M1 5V15L7.5 10Z" fill="#e8e8e8"/></svg>
<div class="a" style="left:877.35px;top:930px;width:0.8px;height:23px;background:#3a3a3a"></div>
<svg class="a" style="left:880.25px;top:931.5px" width="20" height="20" viewBox="0 0 20 20"><path d="M15 4.5V15.5" fill="none" stroke="#e8e8e8" stroke-width="2" stroke-linecap="round" stroke-linejoin="round" /><path d="M4.5 4.5V15.5L12.5 10Z" fill="#e8e8e8"/></svg>
<div class="a t ts" style="left:1276px;top:930px;width:91.5px;height:23px;background:#595959;border-radius:4px;text-align:center;line-height:23px">1</div>
<div class="a" style="left:1374.5px;top:930px;width:242px;height:23px;background:#595959;border-radius:4px"></div>
<div class="a" style="left:1374.5px;top:930px;width:24px;height:23px;background:#4f4f4f;border-radius:4px 0 0 4px;border:1px solid #3d3d3d"></div>
<svg class="a" style="left:1376.5px;top:931.5px" width="20" height="20" viewBox="0 0 20 20"><circle cx="10" cy="11" r="6.6" fill="none" stroke="#e6e6e6" stroke-width="1.4" stroke-linecap="round" stroke-linejoin="round" /><path d="M10 7V11.5H13.5M7.5 2H12.5M10 2V4.2M15.5 5.5L17.5 3.5" fill="none" stroke="#e6e6e6" stroke-width="1.4" stroke-linecap="round" stroke-linejoin="round" /></svg>
<div class="a" style="left:1510.4px;top:930px;width:0.8px;height:23px;background:#3d3d3d"></div>
<div class="a t ts" style="left:1418.5px;top:933px;line-height:16px;">Start</div>
<div class="a t ts" style="left:1485px;top:933px;line-height:16px;">1</div>
<div class="a t ts" style="left:1530.5px;top:933px;line-height:16px;">End</div>
<div class="a t ts" style="left:1575px;top:933px;line-height:16px;">250</div>
<div class="a" style="left:1px;top:956.5px;width:1626.5px;height:24.5px;background:#272727"></div>
<div class="a t" style="left:85.25px;top:956.5px;width:60px;height:24px;text-align:center;line-height:29px;font-size:13.2px;letter-spacing:-0.3px">10</div>
<div class="a t" style="left:145.7px;top:956.5px;width:60px;height:24px;text-align:center;line-height:29px;font-size:13.2px;letter-spacing:-0.3px">20</div>
<div class="a t" style="left:206.14999999999998px;top:956.5px;width:60px;height:24px;text-align:center;line-height:29px;font-size:13.2px;letter-spacing:-0.3px">30</div>
<div class="a t" style="left:266.6px;top:956.5px;width:60px;height:24px;text-align:center;line-height:29px;font-size:13.2px;letter-spacing:-0.3px">40</div>
<div class="a t" style="left:327.05px;top:956.5px;width:60px;height:24px;text-align:center;line-height:29px;font-size:13.2px;letter-spacing:-0.3px">50</div>
<div class="a t" style="left:387.5px;top:956.5px;width:60px;height:24px;text-align:center;line-height:29px;font-size:13.2px;letter-spacing:-0.3px">60</div>
<div class="a t" style="left:447.95px;top:956.5px;width:60px;height:24px;text-align:center;line-height:29px;font-size:13.2px;letter-spacing:-0.3px">70</div>
<div class="a t" style="left:508.4px;top:956.5px;width:60px;height:24px;text-align:center;line-height:29px;font-size:13.2px;letter-spacing:-0.3px">80</div>
<div class="a t" style="left:568.8499999999999px;top:956.5px;width:60px;height:24px;text-align:center;line-height:29px;font-size:13.2px;letter-spacing:-0.3px">90</div>
<div class="a t" style="left:629.3px;top:956.5px;width:60px;height:24px;text-align:center;line-height:29px;font-size:13.2px;letter-spacing:-0.3px">100</div>
<div class="a t" style="left:689.75px;top:956.5px;width:60px;height:24px;text-align:center;line-height:29px;font-size:13.2px;letter-spacing:-0.3px">110</div>
<div class="a t" style="left:750.1999999999999px;top:956.5px;width:60px;height:24px;text-align:center;line-height:29px;font-size:13.2px;letter-spacing:-0.3px">120</div>
<div class="a t" style="left:810.65px;top:956.5px;width:60px;height:24px;text-align:center;line-height:29px;font-size:13.2px;letter-spacing:-0.3px">130</div>
<div class="a t" style="left:871.0999999999999px;top:956.5px;width:60px;height:24px;text-align:center;line-height:29px;font-size:13.2px;letter-spacing:-0.3px">140</div>
<div class="a t" style="left:931.55px;top:956.5px;width:60px;height:24px;text-align:center;line-height:29px;font-size:13.2px;letter-spacing:-0.3px">150</div>
<div class="a t" style="left:992.0px;top:956.5px;width:60px;height:24px;text-align:center;line-height:29px;font-size:13.2px;letter-spacing:-0.3px">160</div>
<div class="a t" style="left:1052.45px;top:956.5px;width:60px;height:24px;text-align:center;line-height:29px;font-size:13.2px;letter-spacing:-0.3px">170</div>
<div class="a t" style="left:1112.8999999999999px;top:956.5px;width:60px;height:24px;text-align:center;line-height:29px;font-size:13.2px;letter-spacing:-0.3px">180</div>
<div class="a t" style="left:1173.35px;top:956.5px;width:60px;height:24px;text-align:center;line-height:29px;font-size:13.2px;letter-spacing:-0.3px">190</div>
<div class="a t" style="left:1233.8px;top:956.5px;width:60px;height:24px;text-align:center;line-height:29px;font-size:13.2px;letter-spacing:-0.3px">200</div>
<div class="a t" style="left:1294.25px;top:956.5px;width:60px;height:24px;text-align:center;line-height:29px;font-size:13.2px;letter-spacing:-0.3px">210</div>
<div class="a t" style="left:1354.7px;top:956.5px;width:60px;height:24px;text-align:center;line-height:29px;font-size:13.2px;letter-spacing:-0.3px">220</div>
<div class="a t" style="left:1415.1499999999999px;top:956.5px;width:60px;height:24px;text-align:center;line-height:29px;font-size:13.2px;letter-spacing:-0.3px">230</div>
<div class="a t" style="left:1475.6px;top:956.5px;width:60px;height:24px;text-align:center;line-height:29px;font-size:13.2px;letter-spacing:-0.3px">240</div>
<div class="a t" style="left:1536.05px;top:956.5px;width:60px;height:24px;text-align:center;line-height:29px;font-size:13.2px;letter-spacing:-0.3px">250</div>
<div class="a t" style="left:45.5px;top:959.5px;width:30.5px;height:21.5px;background:#2f8f44;border-radius:4px;text-align:center;line-height:23px;font-size:13.2px;color:#fff">1</div>
<div class="a" style="left:1px;top:981px;width:1626.5px;height:10px;background:#6b6b6b"></div>
<div class="a" style="left:12px;top:983px;width:9px;height:9px;background:#303030;border-radius:5px;border:1px solid #555"></div>
<div class="a" style="left:1606px;top:983px;width:9px;height:9px;background:#303030;border-radius:5px;border:1px solid #555"></div>
<svg class="a" style="left:0;top:974px" width="10" height="16"><path d="M2 3L7 8L2 13" fill="none" stroke="#aaa" stroke-width="1.3"/></svg>
<svg class="a" style="left:1617px;top:976px" width="10" height="16"><path d="M8 2L3 7L8 12" fill="none" stroke="#aaa" stroke-width="1.3"/></svg></body></html>
